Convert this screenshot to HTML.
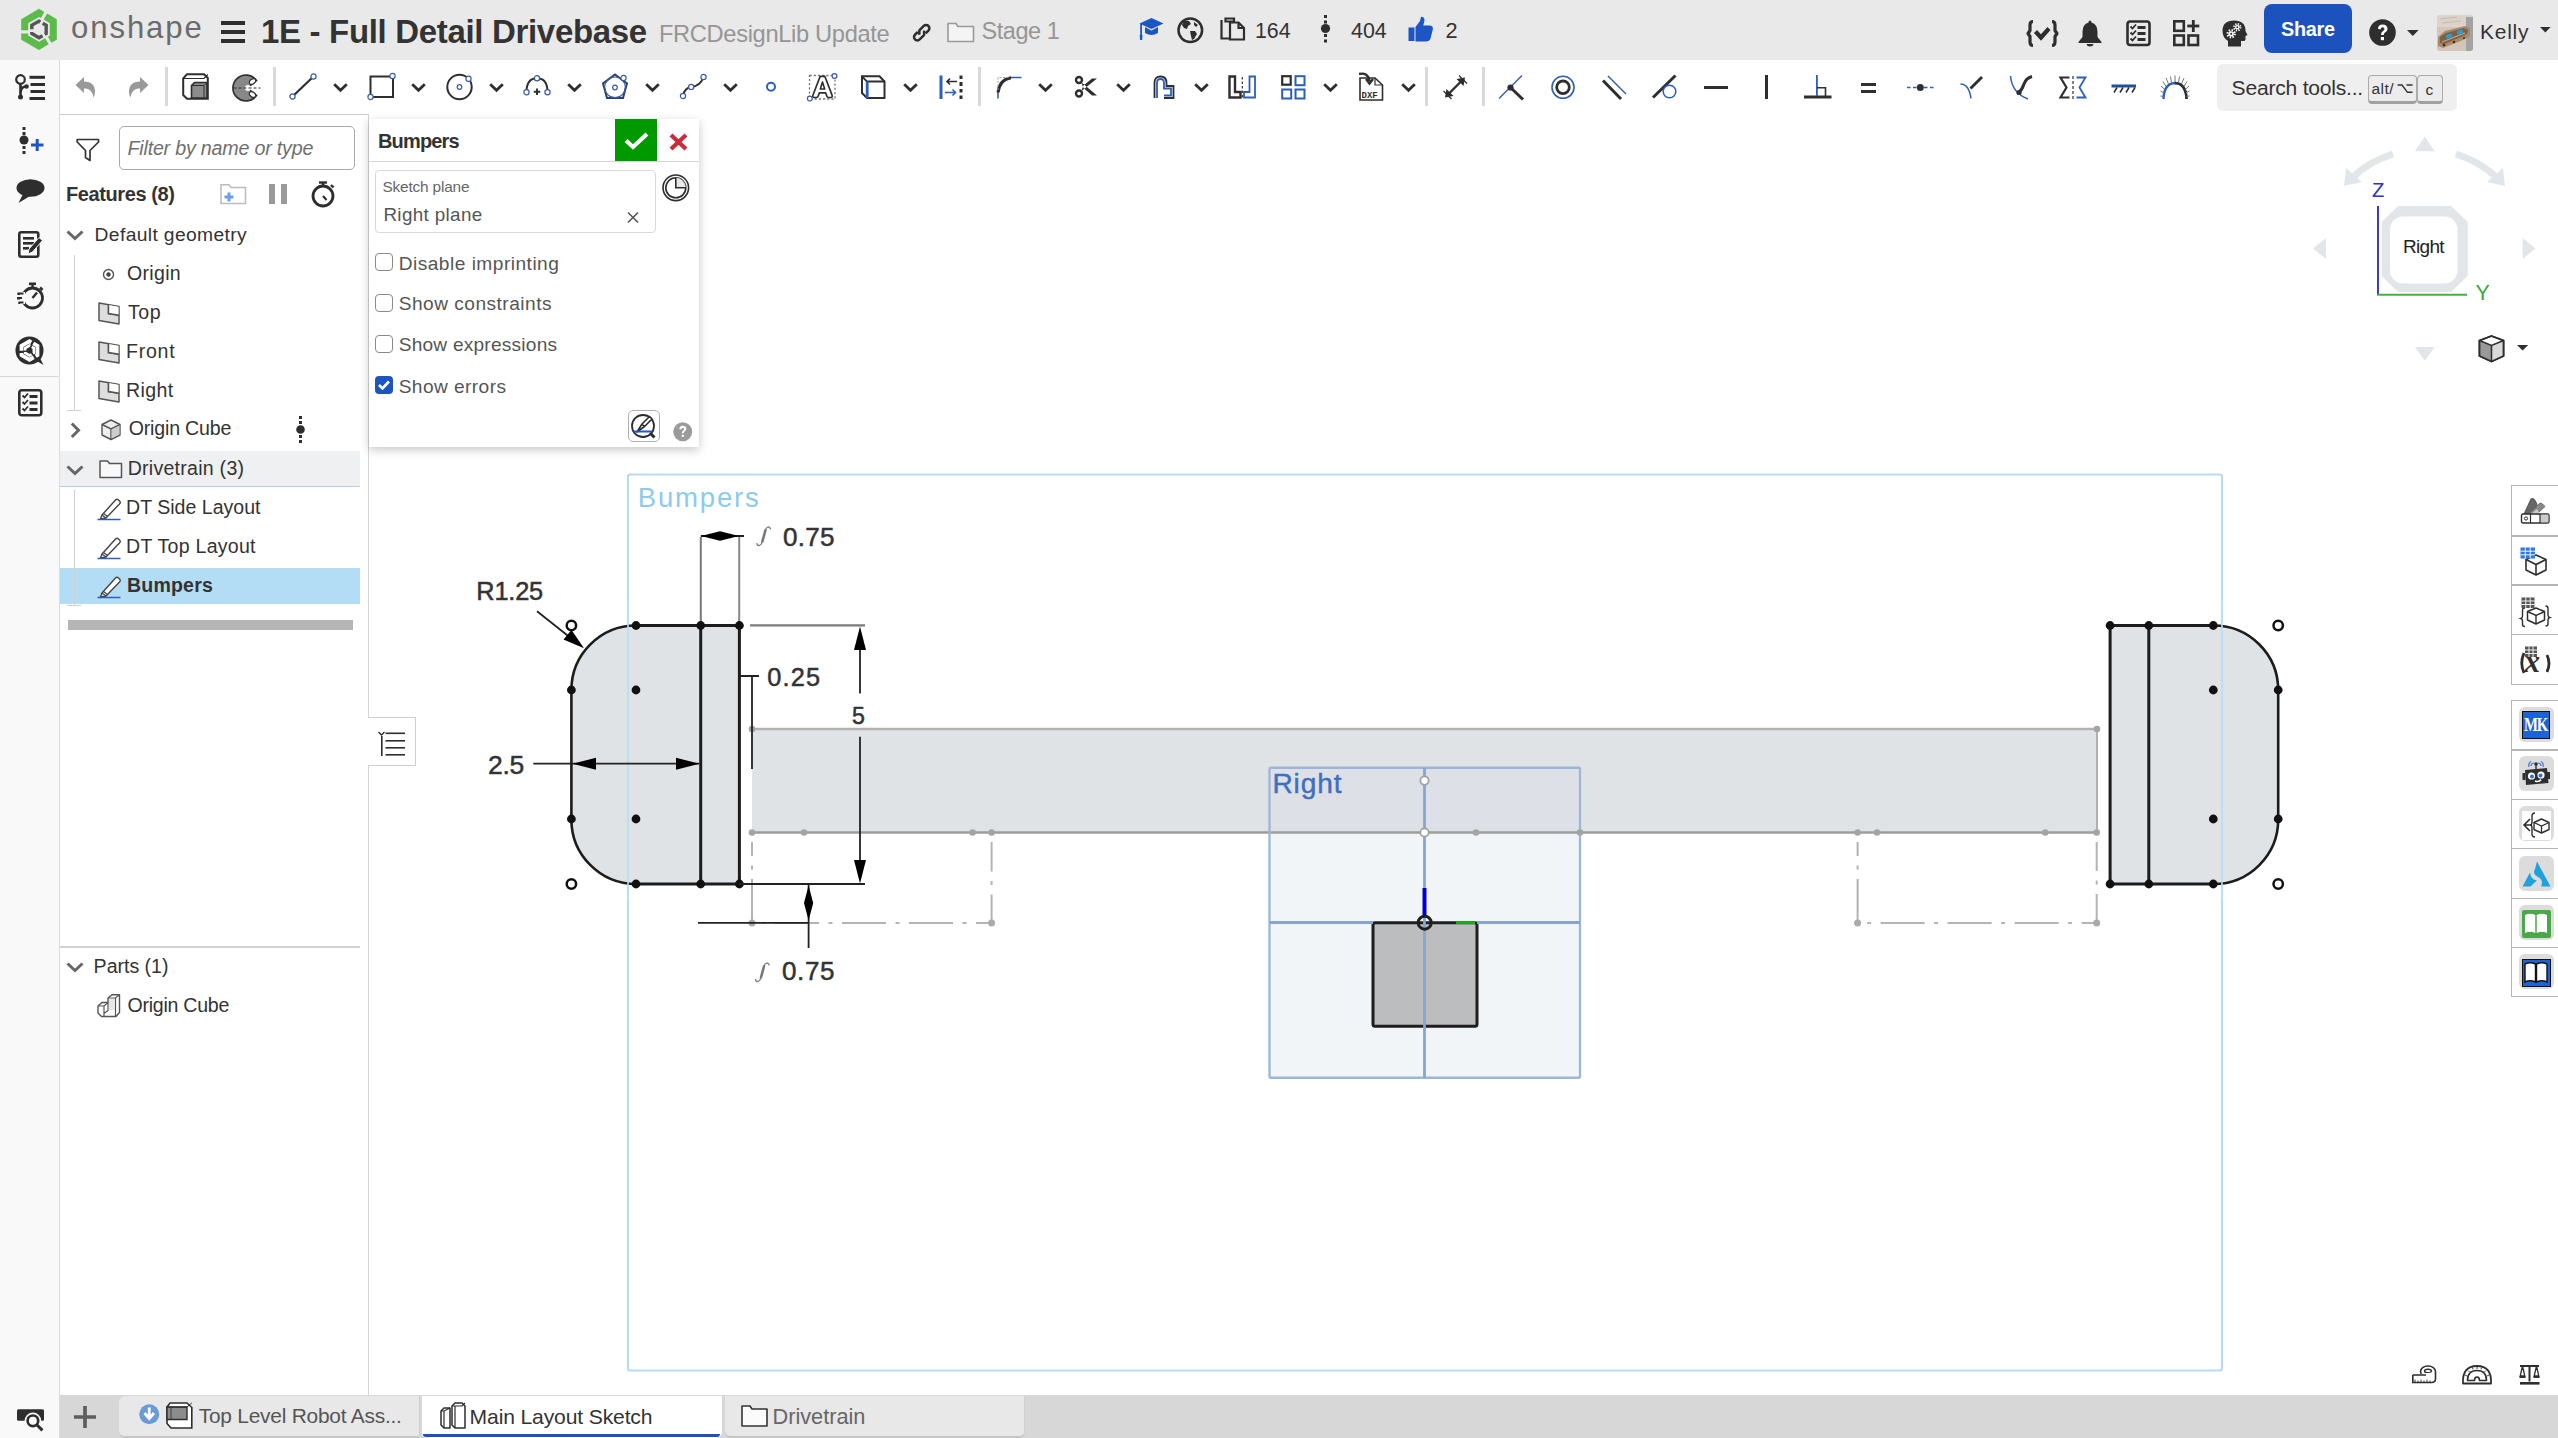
<!DOCTYPE html><html><head><meta charset="utf-8"><style>
html,body{margin:0;padding:0}
body{width:2558px;height:1438px;overflow:hidden;position:relative;background:#fff;font-family:"Liberation Sans",sans-serif}
.t{position:absolute;line-height:1;white-space:nowrap}
svg{overflow:visible}
</style></head><body>
<div style="position:absolute;left:0px;top:0px;width:2558px;height:60px;background:#e9e9e9"></div>
<div style="position:absolute;left:0px;top:60px;width:2558px;height:54px;background:#fff"></div>
<div style="position:absolute;left:0px;top:60px;width:59px;height:1378px;background:#f9f9f9;border-right:1px solid #dcdcdc"></div>
<div style="position:absolute;left:0px;top:376px;width:59px;height:1.3px;background:#d6d6d6"></div>
<div style="position:absolute;left:60px;top:114px;width:308px;height:1281px;background:#fff;border-top:1px solid #cfcfcf;border-right:1px solid #d4d4d4"></div>
<div style="position:absolute;left:60px;top:1395px;width:2498px;height:43px;background:#d7d7d7"></div>
<svg style="position:absolute;left:0px;top:0px;pointer-events:none" width="2558" height="1438" viewBox="0 0 2558 1438"><rect x="752" y="729" width="1345" height="103.5" fill="#e0e3e6"/><rect x="1269.5" y="832.5" width="310.5" height="245.2" fill="#f2f5f8"/><rect x="1269.5" y="767.75" width="310.5" height="64.75" fill="#dde1e7"/><path d="M636,625.5 L739.4,625.5 L739.4,884 L636,884 A64.6,64.6 0 0 1 571.4,819 L571.4,690 A64.6,64.6 0 0 1 636,625.5 Z" fill="#e0e3e6"/><path d="M2213.3,625.5 L2110.1,625.5 L2110.1,884 L2213.3,884 A64.6,64.6 0 0 0 2278.2,819 L2278.2,690 A64.6,64.6 0 0 0 2213.3,625.5 Z" fill="#e0e3e6"/><rect x="628" y="474.5" width="1594" height="896" rx="2" fill="none" stroke="#b7dbf1" stroke-width="2.2"/><line x1="752" y1="729" x2="2097" y2="729" stroke="#b2b2b2" stroke-width="2.5"/><line x1="752" y1="832.5" x2="2097" y2="832.5" stroke="#9d9d9d" stroke-width="2.5"/><line x1="2097" y1="729" x2="2097" y2="832.5" stroke="#b0b0b0" stroke-width="2"/><path d="M752,842 L752,923 L991.6,923 L991.6,842" fill="none" stroke="#b4b4b4" stroke-width="2" stroke-dasharray="44 9.5 4 9.5" stroke-dashoffset="30"/><circle cx="752" cy="923" r="3.5" fill="#aaa"/><circle cx="991.6" cy="923" r="3.5" fill="#aaa"/><path d="M1857.6,842 L1857.6,923 L2096.7,923 L2096.7,842" fill="none" stroke="#b4b4b4" stroke-width="2" stroke-dasharray="44 9.5 4 9.5" stroke-dashoffset="30"/><circle cx="1857.6" cy="923" r="3.5" fill="#aaa"/><circle cx="2096.7" cy="923" r="3.5" fill="#aaa"/><rect x="1269.5" y="767.75" width="310.5" height="310" fill="none" stroke="#9cb6d8" stroke-width="2.3" rx="1.5"/><rect x="1373" y="922.7" width="104" height="103.5" fill="#bcbdbf" stroke="#1e1e1e" stroke-width="3" rx="2"/><line x1="1269.5" y1="922.5" x2="1373" y2="922.5" stroke="#86a6d0" stroke-width="2.8"/><line x1="1477" y1="922.5" x2="1580" y2="922.5" stroke="#86a6d0" stroke-width="2.8"/><line x1="1424.5" y1="767.75" x2="1424.5" y2="1077.7" stroke="#86a6d0" stroke-width="2.8"/><line x1="1456" y1="922.5" x2="1475" y2="922.5" stroke="#1fa51f" stroke-width="3"/><line x1="1424.5" y1="888" x2="1424.5" y2="916" stroke="#0000d2" stroke-width="4"/><circle cx="1424.7" cy="922.7" r="6.5" fill="none" stroke="#1e1e1e" stroke-width="3"/><circle cx="752" cy="729" r="3.3" fill="#a4a4a4"/><circle cx="2097" cy="729" r="3.3" fill="#a4a4a4"/><circle cx="752" cy="832.5" r="3.3" fill="#a4a4a4"/><circle cx="804" cy="832.5" r="3.3" fill="#a4a4a4"/><circle cx="972.6" cy="832.5" r="3.3" fill="#a4a4a4"/><circle cx="991.6" cy="832.5" r="3.3" fill="#a4a4a4"/><circle cx="1476" cy="832.5" r="3.3" fill="#a4a4a4"/><circle cx="1580" cy="832.5" r="3.3" fill="#a4a4a4"/><circle cx="1857.6" cy="832.5" r="3.3" fill="#a4a4a4"/><circle cx="1877" cy="832.5" r="3.3" fill="#a4a4a4"/><circle cx="2045.3" cy="832.5" r="3.3" fill="#a4a4a4"/><circle cx="2096.7" cy="832.5" r="3.3" fill="#a4a4a4"/><circle cx="1424.5" cy="780.6" r="4.2" fill="#fff" stroke="#a0a0a0" stroke-width="1.8"/><circle cx="1424.5" cy="832.5" r="4.2" fill="#fff" stroke="#a0a0a0" stroke-width="1.8"/><line x1="700.8" y1="537" x2="700.8" y2="624" stroke="#777" stroke-width="2"/><line x1="739.2" y1="537" x2="739.2" y2="624" stroke="#888" stroke-width="2"/><line x1="750" y1="625.4" x2="865" y2="625.4" stroke="#7a7a7a" stroke-width="2.2"/><path d="M636,625.5 L739.4,625.5 L739.4,884 L636,884" fill="none" stroke="#1c1c1c" stroke-width="3"/><path d="M636,884 A64.6,64.6 0 0 1 571.4,819 L571.4,690 A64.6,64.6 0 0 1 636,625.5" fill="none" stroke="#1c1c1c" stroke-width="2.6"/><line x1="700.7" y1="625.5" x2="700.7" y2="884" stroke="#1c1c1c" stroke-width="3"/><circle cx="636" cy="625.5" r="4.4" fill="#111"/><circle cx="700.7" cy="625.5" r="4.4" fill="#111"/><circle cx="739.4" cy="625.5" r="4.4" fill="#111"/><circle cx="571.4" cy="690" r="4.4" fill="#111"/><circle cx="636" cy="690" r="4.4" fill="#111"/><circle cx="571.4" cy="819" r="4.4" fill="#111"/><circle cx="636" cy="819" r="4.4" fill="#111"/><circle cx="636" cy="884" r="4.4" fill="#111"/><circle cx="700.7" cy="884" r="4.4" fill="#111"/><circle cx="739.4" cy="884" r="4.4" fill="#111"/><circle cx="571.4" cy="625.5" r="4.7" fill="#fff" stroke="#111" stroke-width="2.5"/><circle cx="571.4" cy="884" r="4.7" fill="#fff" stroke="#111" stroke-width="2.5"/><path d="M2213.3,625.5 L2110.1,625.5 L2110.1,884 L2213.3,884" fill="none" stroke="#1c1c1c" stroke-width="3"/><path d="M2213.3,884 A64.6,64.6 0 0 0 2278.2,819 L2278.2,690 A64.6,64.6 0 0 0 2213.3,625.5" fill="none" stroke="#1c1c1c" stroke-width="2.6"/><line x1="2148.8" y1="625.5" x2="2148.8" y2="884" stroke="#1c1c1c" stroke-width="3"/><circle cx="2213.3" cy="625.5" r="4.4" fill="#111"/><circle cx="2148.8" cy="625.5" r="4.4" fill="#111"/><circle cx="2110.1" cy="625.5" r="4.4" fill="#111"/><circle cx="2278.2" cy="690" r="4.4" fill="#111"/><circle cx="2213.3" cy="690" r="4.4" fill="#111"/><circle cx="2278.2" cy="819" r="4.4" fill="#111"/><circle cx="2213.3" cy="819" r="4.4" fill="#111"/><circle cx="2213.3" cy="884" r="4.4" fill="#111"/><circle cx="2148.8" cy="884" r="4.4" fill="#111"/><circle cx="2110.1" cy="884" r="4.4" fill="#111"/><circle cx="2278.2" cy="625.5" r="4.7" fill="#fff" stroke="#111" stroke-width="2.5"/><circle cx="2278.2" cy="884" r="4.7" fill="#fff" stroke="#111" stroke-width="2.5"/><line x1="628" y1="600" x2="628" y2="900" stroke="#bfe0f4" stroke-width="1.6"/><line x1="2222" y1="600" x2="2222" y2="900" stroke="#bfe0f4" stroke-width="1.6"/><line x1="700.8" y1="536" x2="744" y2="536" stroke="#222" stroke-width="1.8"/><polygon points="701,536 720,531.2 739,536 720,540.8" fill="#000"/><path d="M770.4,528.8 C769.4,526.3 766.4,526.3 765.4,530.3" fill="none" stroke="#808080" stroke-width="1.5" stroke-linecap="round"/><path d="M765.4,530.3 L762.4,541.3" fill="none" stroke="#777" stroke-width="2.5" stroke-linecap="round"/><path d="M762.4,541.3 C761.4,545.8 757.9,546.8 756.9,543.8" fill="none" stroke="#808080" stroke-width="1.5" stroke-linecap="round"/><path d="M769,964.8 C768,962.3 765,962.3 764,966.3" fill="none" stroke="#808080" stroke-width="1.5" stroke-linecap="round"/><path d="M764,966.3 L761,977.3" fill="none" stroke="#777" stroke-width="2.5" stroke-linecap="round"/><path d="M761,977.3 C760,981.8 756.5,982.8 755.5,979.8" fill="none" stroke="#808080" stroke-width="1.5" stroke-linecap="round"/><line x1="537" y1="611.3" x2="572" y2="639" stroke="#222" stroke-width="1.8"/><polygon points="584,648.3 563.5,639.5 571.5,630" fill="#000"/><path d="M739.4,676 L759,676 M752,676 L752,769" fill="none" stroke="#222" stroke-width="1.8"/><line x1="739" y1="884" x2="865" y2="884" stroke="#222" stroke-width="2.2"/><line x1="860" y1="640" x2="860" y2="693.4" stroke="#222" stroke-width="1.8"/><line x1="860" y1="736.7" x2="860" y2="870" stroke="#222" stroke-width="1.8"/><polygon points="860,626.5 854,650 866,650" fill="#000"/><polygon points="860,883.5 854,860 866,860" fill="#000"/><line x1="533.3" y1="763.7" x2="699" y2="763.7" stroke="#222" stroke-width="1.8"/><polygon points="572.5,763.7 596,757.7 596,769.7" fill="#000"/><polygon points="699.5,763.7 676,757.7 676,769.7" fill="#000"/><line x1="808.6" y1="884" x2="808.6" y2="948" stroke="#222" stroke-width="1.8"/><polygon points="808.6,885.5 804,903 808.6,920.5 813.2,903" fill="#000"/><line x1="698" y1="922.9" x2="808.6" y2="922.9" stroke="#222" stroke-width="1.8"/></svg>
<svg style="position:absolute;left:21px;top:9px;" width="36" height="41" viewBox="0 0 36 41"><polygon points="18.00,3.90 32.29,12.15 32.29,28.65 18.00,36.90 3.71,28.65 3.71,12.15" fill="none" stroke="#5cbb4a" stroke-width="7" stroke-linejoin="miter" stroke-dasharray="29.80 3.2" stroke-dashoffset="25.62"/><polygon points="18.00,12.10 25.19,16.25 25.19,24.55 18.00,28.70 10.81,24.55 10.81,16.25" fill="none" stroke="#555" stroke-width="3.4" stroke-dasharray="14.00 2.6" stroke-dashoffset="12.39"/></svg>
<div style="position:absolute;left:221px;top:21px;width:24px;height:4px;background:#2e2e2e"></div>
<div style="position:absolute;left:221px;top:30px;width:24px;height:4px;background:#2e2e2e"></div>
<div style="position:absolute;left:221px;top:39px;width:24px;height:4px;background:#2e2e2e"></div>
<svg style="position:absolute;left:910px;top:22px;" width="24" height="22" viewBox="0 0 24 22"><g transform="translate(11.7,10.7) rotate(-45)" fill="none" stroke="#2e2e2e" stroke-width="2.5" stroke-linejoin="round"><path d="M-2.2,-3.3 L-6.2,-3.3 A3.3,3.3 0 0 0 -6.2,3.3 L0,3.3 L3.2,0.3"/><path d="M2.2,3.3 L6.2,3.3 A3.3,3.3 0 0 0 6.2,-3.3 L0,-3.3 L-3.2,-0.3"/></g></svg>
<svg style="position:absolute;left:947px;top:22px;" width="28" height="21" viewBox="0 0 28 21"><path d="M1,1.5 L9,1.5 L11,4.5 L26.5,4.5 L26.5,19.5 L1,19.5 Z" fill="#f4f4f4" stroke="#9a9a9a" stroke-width="1.6" stroke-linejoin="round"/></svg>
<svg style="position:absolute;left:1140px;top:18px;" width="24" height="23" viewBox="0 0 24 23"><g fill="#1b56c4"><polygon points="11.5,0 23.5,5.5 11.5,11 -0.5,5.5"/><path d="M5,9 L5,15 Q11.5,19 18,15 L18,9 L11.5,12.5 Z"/><rect x="0.2" y="6" width="1.8" height="11"/><path d="M-0.3,17 L2.5,17 L2.2,22 L0,22 Z"/></g></svg>
<svg style="position:absolute;left:1177px;top:16.6px;" width="27" height="27" viewBox="0 0 27 27"><circle cx="13.3" cy="13.3" r="11.8" fill="none" stroke="#2e2e2e" stroke-width="2.5"/><path d="M6,5 Q9,3 12,4 L14,7 L11,9 L10,12 L7,11 L5,8 Z M13,14 L18,14 L20,17 L17,22 L15,23 L14,19 Z M17,5 L21,8 L19,10 L17,8 Z" fill="#2e2e2e"/></svg>
<svg style="position:absolute;left:1220px;top:17px;" width="26" height="24" viewBox="0 0 26 24"><g fill="none" stroke="#2e2e2e" stroke-width="2.2"><path d="M1.5,3 L1.5,21.5 L10,21.5 M5.5,1.5 L14,1.5 L14,4.5 L5.5,4.5 Z"/><path d="M10,5.5 L18.5,5.5 L24,11 L24,22.5 L10,22.5 Z M18.5,5.5 L18.5,11 L24,11"/></g></svg>
<svg style="position:absolute;left:1320px;top:15px;" width="11" height="28" viewBox="0 0 11 28"><g fill="#2e2e2e"><rect x="4" y="0" width="3" height="3"/><rect x="4" y="5.5" width="3" height="3"/><circle cx="5.5" cy="13.5" r="4.6"/><rect x="4" y="19" width="3" height="3"/><rect x="4" y="24.5" width="3" height="3"/></g></svg>
<svg style="position:absolute;left:1408px;top:16px;" width="26" height="26" viewBox="0 0 26 26"><path fill="#1b56c4" d="M0.5,11.5 L6.5,11.5 L6.5,25 L0.5,25 Z M7.5,11 L12,5 L13,0.8 Q16.5,0.5 16.5,4.5 L15.3,9.5 L22,9.5 Q25.5,10 24.8,13.5 L22.5,22.5 Q21.5,25.5 18,25.5 L7.5,25.5 Z"/></svg>
<svg style="position:absolute;left:2027px;top:19.5px;" width="31" height="27" viewBox="0 0 31 27"><g fill="none" stroke="#2e2e2e" stroke-width="3.2" stroke-linejoin="round"><path d="M6,1.5 Q3,1.5 3,5 L3,10.5 L1,13.5 L3,16.5 L3,22 Q3,25.5 6,25.5"/><path d="M25,1.5 Q28,1.5 28,5 L28,10.5 L30,13.5 L28,16.5 L28,22 Q28,25.5 25,25.5"/></g><path d="M8.5,11.5 L14,17.5 L22,8.5" fill="none" stroke="#2e2e2e" stroke-width="4.2"/></svg>
<svg style="position:absolute;left:2078px;top:20px;" width="24" height="27" viewBox="0 0 24 27"><path fill="#2e2e2e" d="M12,0.5 Q13.5,0.5 13.5,2.5 Q19.5,4 19.5,12 L19.5,17 L23.5,22 L23.5,23 L0.5,23 L0.5,22 L4.5,17 L4.5,12 Q4.5,4 10.5,2.5 Q10.5,0.5 12,0.5 Z M8.5,24 L15.5,24 Q15,26.5 12,26.5 Q9,26.5 8.5,24 Z"/></svg>
<svg style="position:absolute;left:2126px;top:19.7px;" width="25" height="27" viewBox="0 0 25 27"><rect x="1.5" y="1.5" width="22" height="23.5" rx="2.5" fill="none" stroke="#2e2e2e" stroke-width="2.6"/><g fill="none" stroke="#2e2e2e" stroke-width="1.8"><path d="M4.5,6.5 L6.5,8.5 L10,4.5"/><path d="M4.5,12.5 L6.5,14.5 L10,10.5"/><path d="M4.5,18.5 L6.5,20.5 L10,16.5"/></g><g fill="#2e2e2e"><rect x="11.5" y="6" width="8" height="3"/><rect x="11.5" y="12" width="8" height="3"/><rect x="11.5" y="18" width="8" height="3"/></g></svg>
<svg style="position:absolute;left:2172.5px;top:19.7px;" width="27" height="27" viewBox="0 0 27 27"><g fill="none" stroke="#2e2e2e" stroke-width="2.6"><rect x="1.3" y="1.3" width="9.5" height="9.5"/><rect x="1.3" y="15.5" width="9.5" height="9.5"/><rect x="15.5" y="15.5" width="9.5" height="9.5"/></g><g fill="#2e2e2e"><rect x="18.9" y="0" width="2.8" height="12"/><rect x="14.3" y="4.6" width="12" height="2.8"/></g></svg>
<svg style="position:absolute;left:2222px;top:19.7px;" width="26" height="27" viewBox="0 0 26 27"><path fill="#2e2e2e" d="M12,0.5 Q23.5,0.5 23.5,11 L25.5,15 L23.5,16 L23.5,19.5 Q23.5,21 21,21 L19,21 L19,26.5 L6,26.5 L6,21 Q0.5,17.5 0.5,11 Q0.5,0.5 12,0.5 Z"/><circle cx="9.2" cy="13.8" r="2.6" fill="#fff"/><circle cx="9.2" cy="13.8" r="3.6" fill="none" stroke="#fff" stroke-width="2.2" stroke-dasharray="1.41 1.41"/><circle cx="9.2" cy="13.8" r="1.09" fill="#2e2e2e"/><circle cx="15.3" cy="7.2" r="2.1" fill="#fff"/><circle cx="15.3" cy="7.2" r="3.1" fill="none" stroke="#fff" stroke-width="2.2" stroke-dasharray="1.22 1.22"/><circle cx="15.3" cy="7.2" r="0.88" fill="#2e2e2e"/></svg>
<div style="position:absolute;left:2264px;top:4px;width:88px;height:49px;background:#1b52bd;border-radius:8px"></div>
<svg style="position:absolute;left:2368.6px;top:19px;" width="27" height="27" viewBox="0 0 27 27"><circle cx="13.5" cy="13.5" r="13.3" fill="#2e2e2e"/><path d="M9,10 Q9,5.5 13.5,5.5 Q18.5,5.5 18.5,10 Q18.5,12.5 15.5,14 Q14.8,14.5 14.8,16 L12,16 Q12,13 14,12 Q15.5,11 15.5,10 Q15.5,8.3 13.5,8.3 Q11.8,8.3 11.8,10.2 Z" fill="#fff"/><rect x="11.8" y="18" width="3.2" height="3.2" fill="#fff"/></svg>
<svg style="position:absolute;left:2407px;top:29.5px;" width="12" height="7" viewBox="0 0 12 7"><polygon points="0,0 11.6,0 5.8,6" fill="#2e2e2e"/></svg>
<svg style="position:absolute;left:2437px;top:15px;" width="36" height="36" viewBox="0 0 36 36"><defs><clipPath id="av"><rect x="0" y="0" width="36" height="36" rx="3"/></clipPath></defs><g clip-path="url(#av)"><rect width="36" height="36" fill="#d3c6b8"/><rect x="0" y="0" width="36" height="12" fill="#ddd3ca"/><path d="M3,4 L20,2 M5,8 L24,6" stroke="#bfb2a6" stroke-width="0.8"/><rect x="29" y="2" width="7" height="34" fill="#a3a3a3"/><polygon points="1,22 8,16 28,11 33,13 33,21 26,25 6,33 1,31" fill="#a98a68"/><polygon points="3,22 9,18 27,13 31,15 30,19 24,22 7,29 3,28" fill="#7c6148"/><path d="M5,27 L28,18" stroke="#c4a784" stroke-width="1.2"/><rect x="9" y="19" width="6" height="4" rx="1" fill="#2a9ad8" transform="rotate(-18 12 21)"/><rect x="20" y="15" width="6" height="4" rx="1" fill="#2a9ad8" transform="rotate(-18 23 17)"/><circle cx="7" cy="30" r="1.3" fill="#3a2c22"/><circle cx="17" cy="27" r="1.3" fill="#3a2c22"/><circle cx="27" cy="23" r="1.1" fill="#3a2c22"/></g></svg>
<svg style="position:absolute;left:2539.6px;top:27px;" width="11" height="6" viewBox="0 0 11 6"><polygon points="0,0 10.6,0 5.3,5.5" fill="#2e2e2e"/></svg>
<svg style="position:absolute;left:15px;top:74px;" width="31" height="27" viewBox="0 0 31 27"><circle cx="5.5" cy="5.5" r="4.3" fill="none" stroke="#2e2e2e" stroke-width="2.2"/><path d="M5.5,10 L5.5,23.5 M5.5,19 Q5.5,12.5 11.5,12.5" fill="none" stroke="#2e2e2e" stroke-width="2.6"/><circle cx="5.5" cy="23" r="2.5" fill="#2e2e2e"/><circle cx="11.5" cy="12.5" r="2.3" fill="#2e2e2e"/><g fill="#2e2e2e"><rect x="14.5" y="1.8" width="15.5" height="3"/><rect x="15.5" y="9" width="14.5" height="3"/><rect x="15.5" y="16" width="14.5" height="3"/><rect x="14.5" y="23" width="15.5" height="3"/></g></svg>
<svg style="position:absolute;left:75px;top:75.5px;" width="21" height="22" viewBox="0 0 21 22"><path d="M0.5,9 L9,1 L9,5.5 Q20,5.5 20,16 Q20,19 18.5,21.5 Q17,12 9,12.5 L9,17 Z" fill="#999"/></svg>
<svg style="position:absolute;left:128px;top:75.5px;" width="21" height="22" viewBox="0 0 21 22"><path d="M20.5,9 L12,1 L12,5.5 Q1,5.5 1,16 Q1,19 2.5,21.5 Q4,12 12,12.5 L12,17 Z" fill="#999"/></svg>
<div style="position:absolute;left:165.0px;top:67px;width:3px;height:39px;background:#d9d9d9"></div>
<svg style="position:absolute;left:181.5px;top:73.4px;" width="27" height="27" viewBox="0 0 27 27"><path d="M1.2,5.5 L5,1.2 L22,1.2 L25.8,5 L25.8,25.8 L5,25.8 L1.2,22 Z" fill="#fff" stroke="#2e2e2e" stroke-width="2"/><path d="M1.2,5.5 L22,5.5 L25.8,1.5" fill="none" stroke="#2e2e2e" stroke-width="1.2"/><path d="M9.5,12.5 L12.5,9.5 L25,9.5 L25,25 L9.5,25 Z" fill="#8c8c8c" stroke="#2e2e2e" stroke-width="1.6"/><path d="M9.5,12.5 L22,12.5 L25,9.5 M22,12.5 L22,25" fill="none" stroke="#2e2e2e" stroke-width="1"/></svg>
<svg style="position:absolute;left:233px;top:74px;" width="28" height="28" viewBox="0 0 28 28"><path d="M23.5,6.5 A13,13 0 1 0 23.5,21.5 L14.5,14 Z" fill="#888" stroke="#2e2e2e" stroke-width="1.6"/><ellipse cx="19.5" cy="7.5" rx="3.5" ry="2.3" transform="rotate(-35 19.5 7.5)" fill="#fff" stroke="#2e2e2e" stroke-width="1.2"/><ellipse cx="19.5" cy="20.5" rx="3.5" ry="2.3" transform="rotate(35 19.5 20.5)" fill="#fff" stroke="#2e2e2e" stroke-width="1.2"/><circle cx="15" cy="14" r="3" fill="#fff"/><path d="M0.5,14 L27.5,14" stroke="#2e2e2e" stroke-width="1.2" stroke-dasharray="3 2"/></svg>
<div style="position:absolute;left:272.5px;top:67px;width:3px;height:39px;background:#d9d9d9"></div>
<svg style="position:absolute;left:289px;top:73.4px;" width="28" height="27" viewBox="0 0 28 27"><line x1="3.5" y1="23.5" x2="24.5" y2="3.5" stroke="#2e2e2e" stroke-width="2.2"/><circle cx="3.5" cy="23.5" r="2.6" fill="#fff" stroke="#3a5ca6" stroke-width="1.2"/><circle cx="24.5" cy="3.5" r="2.6" fill="#fff" stroke="#3a5ca6" stroke-width="1.2"/></svg>
<svg style="position:absolute;left:333px;top:83px;" width="15" height="9" viewBox="0 0 15 9"><path d="M1.2,1.2 L7.5,7.3 L13.8,1.2" fill="none" stroke="#2e2e2e" stroke-width="2.8"/></svg>
<svg style="position:absolute;left:368px;top:73.4px;" width="27" height="27" viewBox="0 0 27 27"><rect x="2.5" y="3.5" width="22.5" height="20.5" fill="none" stroke="#2e2e2e" stroke-width="2"/><circle cx="2.5" cy="24" r="2.6" fill="#fff" stroke="#3a5ca6" stroke-width="1.2"/><circle cx="24.5" cy="3" r="2.6" fill="#fff" stroke="#3a5ca6" stroke-width="1.2"/></svg>
<svg style="position:absolute;left:411px;top:83px;" width="15" height="9" viewBox="0 0 15 9"><path d="M1.2,1.2 L7.5,7.3 L13.8,1.2" fill="none" stroke="#2e2e2e" stroke-width="2.8"/></svg>
<svg style="position:absolute;left:445.5px;top:73.4px;" width="27" height="27" viewBox="0 0 27 27"><circle cx="13.5" cy="14" r="12.2" fill="none" stroke="#2e2e2e" stroke-width="2"/><circle cx="13.5" cy="14" r="2.3" fill="#fff" stroke="#3a5ca6" stroke-width="1.2"/><circle cx="22.5" cy="5.8" r="2.6" fill="#fff" stroke="#3a5ca6" stroke-width="1.2"/></svg>
<svg style="position:absolute;left:489px;top:83px;" width="15" height="9" viewBox="0 0 15 9"><path d="M1.2,1.2 L7.5,7.3 L13.8,1.2" fill="none" stroke="#2e2e2e" stroke-width="2.8"/></svg>
<svg style="position:absolute;left:523px;top:73.4px;" width="29" height="27" viewBox="0 0 29 27"><path d="M3.5,19.3 Q3.5,5.3 14,5.3 Q24.5,5.3 24.5,19.3" fill="none" stroke="#2e2e2e" stroke-width="2"/><circle cx="14" cy="5.3" r="2.6" fill="#fff" stroke="#3a5ca6" stroke-width="1.2"/><circle cx="3.5" cy="19.3" r="2.6" fill="#fff" stroke="#3a5ca6" stroke-width="1.2"/><circle cx="24.5" cy="19.3" r="2.6" fill="#fff" stroke="#3a5ca6" stroke-width="1.2"/><path d="M14,15.5 L14,22 M10.8,18.8 L17.2,18.8" stroke="#2e2e2e" stroke-width="1.9"/></svg>
<svg style="position:absolute;left:567px;top:83px;" width="15" height="9" viewBox="0 0 15 9"><path d="M1.2,1.2 L7.5,7.3 L13.8,1.2" fill="none" stroke="#2e2e2e" stroke-width="2.8"/></svg>
<svg style="position:absolute;left:602px;top:73.4px;" width="27" height="27" viewBox="0 0 27 27"><polygon points="13,1.5 25,10.5 21,25 5,25 1,10.5" fill="none" stroke="#2a3e6a" stroke-width="2"/><circle cx="13" cy="14.3" r="10.3" fill="none" stroke="#3a5ca6" stroke-width="1.1"/><circle cx="13" cy="14.5" r="2.3" fill="#fff" stroke="#3a5ca6" stroke-width="1.2"/><circle cx="21.5" cy="5" r="2.6" fill="#fff" stroke="#3a5ca6" stroke-width="1.2"/></svg>
<svg style="position:absolute;left:645px;top:83px;" width="15" height="9" viewBox="0 0 15 9"><path d="M1.2,1.2 L7.5,7.3 L13.8,1.2" fill="none" stroke="#2e2e2e" stroke-width="2.8"/></svg>
<svg style="position:absolute;left:680px;top:73.4px;" width="27" height="27" viewBox="0 0 27 27"><path d="M3,23 C4,17 7,14.5 11.2,14 C16,13.5 21,11 23.5,4" fill="none" stroke="#2e2e2e" stroke-width="2"/><circle cx="3" cy="23" r="2.6" fill="#fff" stroke="#3a5ca6" stroke-width="1.2"/><circle cx="11.2" cy="13.9" r="2.6" fill="#fff" stroke="#3a5ca6" stroke-width="1.2"/><circle cx="23.5" cy="4" r="2.6" fill="#fff" stroke="#3a5ca6" stroke-width="1.2"/></svg>
<svg style="position:absolute;left:723px;top:83px;" width="15" height="9" viewBox="0 0 15 9"><path d="M1.2,1.2 L7.5,7.3 L13.8,1.2" fill="none" stroke="#2e2e2e" stroke-width="2.8"/></svg>
<svg style="position:absolute;left:766px;top:82px;" width="10" height="10" viewBox="0 0 10 10"><circle cx="5" cy="4.7" r="4" fill="#fff" stroke="#2b5fb8" stroke-width="2"/></svg>
<svg style="position:absolute;left:807px;top:73px;" width="31" height="28" viewBox="0 0 31 28"><rect x="2.5" y="2.5" width="25.5" height="23.5" fill="none" stroke="#777" stroke-width="1.3" stroke-dasharray="2.2 2"/><path d="M7.5,24.5 Q5,24.5 6,22 L13.2,3.3 L17.8,3.3 L25,22 Q26,24.5 23.5,24.5 L21.5,24.5 Q20.3,24.5 19.8,23 L18.6,19.8 L12.4,19.8 L11.2,23 Q10.7,24.5 9.5,24.5 Z" fill="#fff" stroke="#2e2e2e" stroke-width="1.7" stroke-linejoin="round"/><path d="M13.3,16 L15.5,9 L17.7,16 Z" fill="#fff" stroke="#2e2e2e" stroke-width="1.6" stroke-linejoin="round"/><circle cx="2.8" cy="25.6" r="2.4" fill="#fff" stroke="#3a5ca6" stroke-width="1.2"/><circle cx="27.5" cy="3" r="2.4" fill="#fff" stroke="#3a5ca6" stroke-width="1.2"/></svg>
<svg style="position:absolute;left:861px;top:75px;" width="25" height="24" viewBox="0 0 25 24"><path d="M1,1.3 L18.5,1.3 L23.5,6.5 L23.5,23 L6,23 L1,18 Z" fill="none" stroke="#2e2e2e" stroke-width="2"/><path d="M1,1.3 L6,6.5 L23.5,6.5 M6,6.5 L6,23" fill="none" stroke="#2e2e2e" stroke-width="1.8"/><rect x="4.8" y="6.5" width="2.8" height="16.5" fill="#2b5fb8"/></svg>
<svg style="position:absolute;left:903px;top:83px;" width="15" height="9" viewBox="0 0 15 9"><path d="M1.2,1.2 L7.5,7.3 L13.8,1.2" fill="none" stroke="#2e2e2e" stroke-width="2.8"/></svg>
<svg style="position:absolute;left:939px;top:74.5px;" width="25" height="25" viewBox="0 0 25 25"><rect x="0.5" y="0.5" width="3" height="23.5" fill="#2b5fb8"/><g fill="#2e2e2e"><rect x="20.5" y="0.5" width="3" height="3.5"/><rect x="20.5" y="7" width="3" height="4"/><rect x="20.5" y="14" width="3" height="3.5"/><rect x="20.5" y="20.5" width="3" height="3.5"/></g><path d="M18,6.5 L8,6.5 M11,3.5 L8,6.5 L11,9.5" fill="none" stroke="#2e2e2e" stroke-width="1.6"/><path d="M6,17.5 L16.5,17.5 M13.5,14.5 L16.5,17.5 L13.5,20.5" fill="none" stroke="#2b5fb8" stroke-width="1.6"/></svg>
<div style="position:absolute;left:977.5px;top:67px;width:3px;height:39px;background:#d9d9d9"></div>
<svg style="position:absolute;left:995.5px;top:75px;" width="26" height="24" viewBox="0 0 26 24"><path d="M2,23.5 L2,17 Q3,4 15,2.5 L25.5,2.5" fill="none" stroke="#2b5fb8" stroke-width="1.6"/><path d="M2,17.5 Q3.5,4.5 15,2.8" fill="none" stroke="#2e2e2e" stroke-width="3"/><path d="M2,15 L2,2.5 L14,2.5" fill="none" stroke="#999" stroke-width="1" stroke-dasharray="2 1.5"/></svg>
<svg style="position:absolute;left:1038px;top:83px;" width="15" height="9" viewBox="0 0 15 9"><path d="M1.2,1.2 L7.5,7.3 L13.8,1.2" fill="none" stroke="#2e2e2e" stroke-width="2.8"/></svg>
<svg style="position:absolute;left:1074.6px;top:76px;" width="23" height="22" viewBox="0 0 23 22"><circle cx="4" cy="4" r="3" fill="none" stroke="#2e2e2e" stroke-width="2.4"/><circle cx="4" cy="17.5" r="3" fill="none" stroke="#2e2e2e" stroke-width="2.4"/><path d="M6,6 L22,19.5 L17,19.5 L8.5,12 Z M6,15.5 L22,2.5 L17,2.5 L8.5,9.5 Z" fill="#2e2e2e"/></svg>
<svg style="position:absolute;left:1116px;top:83px;" width="15" height="9" viewBox="0 0 15 9"><path d="M1.2,1.2 L7.5,7.3 L13.8,1.2" fill="none" stroke="#2e2e2e" stroke-width="2.8"/></svg>
<svg style="position:absolute;left:1153px;top:75px;" width="23" height="24" viewBox="0 0 23 24"><path d="M1.5,23 L1.5,8 Q1.5,1.5 7.5,1.5 Q13.5,1.5 13.5,8 L13.5,11 L20.5,11 L20.5,23 L11,23" fill="none" stroke="#2e2e2e" stroke-width="1.8"/><path d="M4,23 L4,8 Q4,4 7.5,4 Q11,4 11,8 L11,13.5 L18,13.5 L18,20.5 L11,20.5" fill="none" stroke="#2b5fb8" stroke-width="1.8"/></svg>
<svg style="position:absolute;left:1194px;top:83px;" width="15" height="9" viewBox="0 0 15 9"><path d="M1.2,1.2 L7.5,7.3 L13.8,1.2" fill="none" stroke="#2e2e2e" stroke-width="2.8"/></svg>
<svg style="position:absolute;left:1228px;top:75px;" width="29" height="24" viewBox="0 0 29 24"><path d="M1.5,1.5 L7,1.5 L7,17 L12.5,17 L12.5,22.5 L1.5,22.5 Z" fill="none" stroke="#2e2e2e" stroke-width="2.4"/><path d="M27,1.5 L21.5,1.5 L21.5,17 L16,17 L16,22.5 L27,22.5 Z" fill="none" stroke="#2b5fb8" stroke-width="1.8"/><path d="M14.3,2 L14.3,23" stroke="#2e2e2e" stroke-width="1.2" stroke-dasharray="2.5 2"/></svg>
<svg style="position:absolute;left:1281px;top:75px;" width="25" height="25" viewBox="0 0 25 25"><rect x="1.2" y="1.2" width="8.5" height="8.5" fill="none" stroke="#2e2e2e" stroke-width="2.2"/><g fill="none" stroke="#2b5fb8" stroke-width="2"><rect x="14.5" y="1.2" width="9" height="9"/><rect x="1.2" y="14.5" width="9" height="9"/><rect x="14.5" y="14.5" width="9" height="9"/></g></svg>
<svg style="position:absolute;left:1323px;top:83px;" width="15" height="9" viewBox="0 0 15 9"><path d="M1.2,1.2 L7.5,7.3 L13.8,1.2" fill="none" stroke="#2e2e2e" stroke-width="2.8"/></svg>
<svg style="position:absolute;left:1359px;top:73px;" width="25" height="28" viewBox="0 0 25 28"><path d="M1,5 L16,5 L23.5,12 L23.5,27 L1,27 Z" fill="#fff" stroke="#2e2e2e" stroke-width="1.6"/><path d="M16,5 L16,12 L23.5,12" fill="none" stroke="#2e2e2e" stroke-width="1.2"/><path d="M0,1 Q9,-1 10.5,8 M7,6 L10.5,10.5 L14,6" fill="none" stroke="#2e2e2e" stroke-width="2.4"/><text x="2.5" y="24.5" font-family="Liberation Mono" font-weight="bold" font-size="9" fill="#2e2e2e">DXF</text></svg>
<svg style="position:absolute;left:1401px;top:83px;" width="15" height="9" viewBox="0 0 15 9"><path d="M1.2,1.2 L7.5,7.3 L13.8,1.2" fill="none" stroke="#2e2e2e" stroke-width="2.8"/></svg>
<div style="position:absolute;left:1425.0px;top:67px;width:3px;height:39px;background:#d9d9d9"></div>
<svg style="position:absolute;left:1443px;top:74px;" width="25" height="26" viewBox="0 0 25 26"><path d="M4,21.5 L20,5.5" stroke="#2e2e2e" stroke-width="2.4"/><polygon points="2,23.5 3.5,15 10.5,22" fill="#2e2e2e"/><polygon points="22,3.5 20.5,12 13.5,5" fill="#2e2e2e"/><path d="M16,1.5 L24,9.5 M0.5,17 L8.5,25" stroke="#2e2e2e" stroke-width="1.2"/></svg>
<div style="position:absolute;left:1482.0px;top:67px;width:3px;height:39px;background:#d9d9d9"></div>
<svg style="position:absolute;left:1498px;top:73.5px;" width="27" height="27" viewBox="0 0 27 27"><path d="M1,24.5 L24,1.5" stroke="#2b5fb8" stroke-width="1.5"/><path d="M12.5,13.5 L25,25.5" stroke="#2e2e2e" stroke-width="3"/><circle cx="12.5" cy="13.5" r="3.1" fill="#2e2e2e"/></svg>
<svg style="position:absolute;left:1551px;top:74.5px;" width="25" height="25" viewBox="0 0 25 25"><circle cx="12" cy="12.3" r="11" fill="none" stroke="#2b5fb8" stroke-width="1.6"/><circle cx="12" cy="12.3" r="6.3" fill="none" stroke="#2e2e2e" stroke-width="2.8"/></svg>
<svg style="position:absolute;left:1602px;top:74.5px;" width="25" height="25" viewBox="0 0 25 25"><path d="M1,5.5 L19,24" stroke="#2e2e2e" stroke-width="3"/><path d="M6,1 L24,19" stroke="#2b5fb8" stroke-width="1.5"/></svg>
<svg style="position:absolute;left:1652px;top:73.5px;" width="26" height="26" viewBox="0 0 26 26"><path d="M1,23.5 L23.5,1.5" stroke="#2e2e2e" stroke-width="3"/><circle cx="17.5" cy="17.5" r="6.3" fill="none" stroke="#2b5fb8" stroke-width="1.5"/></svg>
<div style="position:absolute;left:1704px;top:85.5px;width:24px;height:3px;background:#2e2e2e"></div>
<div style="position:absolute;left:1765px;top:75px;width:3px;height:23.7px;background:#2e2e2e"></div>
<svg style="position:absolute;left:1804px;top:75px;" width="28" height="24" viewBox="0 0 28 24"><rect x="0" y="20.5" width="27.5" height="3" fill="#2e2e2e"/><rect x="12" y="0" width="1.8" height="21" fill="#2b5fb8"/><path d="M13,12.8 L21.5,12.8 L21.5,21" fill="none" stroke="#2e2e2e" stroke-width="1.6"/></svg>
<div style="position:absolute;left:1861px;top:82.5px;width:15px;height:3px;background:#2e2e2e"></div>
<div style="position:absolute;left:1861px;top:89.5px;width:15px;height:3px;background:#2e2e2e"></div>
<svg style="position:absolute;left:1907px;top:82px;" width="27" height="11" viewBox="0 0 27 11"><path d="M0,5.5 L3.5,5.5 M23,5.5 L26.5,5.5" stroke="#2b5fb8" stroke-width="1.5"/><path d="M6,5.5 L9.5,5.5 M17,5.5 L20.5,5.5" stroke="#2b5fb8" stroke-width="1.5"/><circle cx="13.3" cy="5.5" r="3.5" fill="#2e2e2e"/></svg>
<svg style="position:absolute;left:1959.5px;top:75.5px;" width="23" height="23" viewBox="0 0 23 23"><path d="M0.5,8 Q9,8 11,22.5" fill="none" stroke="#2b5fb8" stroke-width="1.5"/><path d="M10.5,12.5 L22,1" stroke="#2e2e2e" stroke-width="2.8"/></svg>
<svg style="position:absolute;left:2010px;top:74.5px;" width="24" height="25" viewBox="0 0 24 25"><path d="M0.5,1 Q2,18 18,24" fill="none" stroke="#2b5fb8" stroke-width="1.5"/><path d="M8.5,18 Q12,15 14,9 Q16,3 22,1.5" fill="none" stroke="#2e2e2e" stroke-width="3"/><circle cx="9" cy="17.5" r="2.6" fill="#2e2e2e"/></svg>
<svg style="position:absolute;left:2059px;top:75.5px;" width="28" height="23" viewBox="0 0 28 23"><path d="M10.5,1.5 L1.5,1.5 L7.5,11.5 L1.5,21.5 L10.5,21.5" fill="none" stroke="#2e2e2e" stroke-width="2.2"/><path d="M17.5,1.5 L26.5,1.5 L20.5,11.5 L26.5,21.5 L17.5,21.5" fill="none" stroke="#2b5fb8" stroke-width="1.8"/><path d="M14,0 L14,23" stroke="#2e2e2e" stroke-width="1.2" stroke-dasharray="3 2"/></svg>
<svg style="position:absolute;left:2111px;top:83.5px;" width="26" height="9" viewBox="0 0 26 9"><rect x="0.5" y="0.5" width="24.5" height="3" fill="#1e4f9e"/><path d="M3,8.5 L6,3.5 M9,8.5 L12,3.5 M15,8.5 L18,3.5 M21,8.5 L24,3.5" stroke="#2e2e2e" stroke-width="1.5"/></svg>
<svg style="position:absolute;left:2160px;top:74.5px;" width="31" height="25" viewBox="0 0 31 25"><path d="M3.5,24 Q4,8.5 15,8 Q26,8.5 26.5,24" fill="none" stroke="#2b5fb8" stroke-width="2.4"/><path d="M15,8 Q26,8.5 26.5,24" fill="none" stroke="#2e2e2e" stroke-width="2.4"/><g stroke="#777" stroke-width="1"><path d="M15,7 L15,0.5 M11.5,7.5 L10.5,1.5 M18.5,7.5 L19.5,1.5 M8.5,9 L6,3 M21.5,9 L24,3 M6,11.5 L3,6.5 M24,11.5 L27,6.5 M4.7,14.5 L1,11 M25.3,14.5 L29,11 M4,18 L0.5,16 M26,18 L29.5,16 M3.7,21.5 L0.5,21 M26.3,21.5 L29.5,21"/></g></svg>
<div style="position:absolute;left:2217px;top:63.5px;width:240px;height:47px;background:#efefef;border-radius:6px"></div>
<div style="position:absolute;left:2368px;top:75px;width:48.5px;height:28.5px;background:#ececec;border:1.3px solid #ababab;border-bottom:3px solid #a0a0a0;border-radius:4px;box-sizing:border-box"></div>
<div style="position:absolute;left:2417px;top:75px;width:26px;height:28.5px;background:#ececec;border:1.3px solid #ababab;border-bottom:3px solid #a0a0a0;border-radius:4px;box-sizing:border-box"></div>
<div class="t" style="left:2371.5px;top:81.4px;font-size:15.5px;color:#333;letter-spacing:0.5px">alt/</div>
<svg style="position:absolute;left:2396.5px;top:84.4px;" width="16" height="10" viewBox="0 0 16 10"><path d="M0.5,1 L5,1 L10.5,8.3 L15.5,8.3 M9.5,1 L15.5,1" fill="none" stroke="#333" stroke-width="1.4"/></svg>
<div class="t" style="left:2425.5px;top:81.5px;font-size:15.5px;color:#333">c</div>
<div style="position:absolute;left:60px;top:451px;width:300px;height:35px;background:#eef0f2;border-bottom:1.5px solid #b4d3ea"></div>
<div style="position:absolute;left:60px;top:568px;width:300px;height:35.5px;background:#b3dcf5"></div>
<svg style="position:absolute;left:19px;top:126.5px;" width="25" height="27" viewBox="0 0 25 27"><g fill="#2e2e2e"><rect x="3.5" y="0" width="3" height="3"/><rect x="3.5" y="5" width="3" height="3"/><circle cx="5" cy="13" r="4.5"/><rect x="3.5" y="19" width="3" height="3"/><rect x="3.5" y="24" width="3" height="3"/></g><path d="M12,18 L24.5,18 M18.2,12 L18.2,24" stroke="#1b56c4" stroke-width="3"/></svg>
<svg style="position:absolute;left:15.5px;top:179px;" width="29" height="25" viewBox="0 0 29 25"><ellipse cx="14.5" cy="9" rx="14" ry="8.7" fill="#2e2e2e"/><path d="M7,15 L2.5,24 L14,17 Z" fill="#2e2e2e"/></svg>
<svg style="position:absolute;left:18px;top:231px;" width="26" height="28" viewBox="0 0 26 28"><rect x="1.3" y="1.3" width="19" height="24.5" rx="2" fill="none" stroke="#2e2e2e" stroke-width="2.6"/><g fill="#2e2e2e"><rect x="5" y="6" width="11" height="2.6"/><rect x="5" y="11" width="11" height="2.6"/><rect x="5" y="16" width="6" height="2.6"/></g><path d="M10,23 L11,18 L21,6.5 L24.5,9.5 L14.5,21 Z" fill="#2e2e2e" stroke="#f9f9f9" stroke-width="1"/></svg>
<svg style="position:absolute;left:16.7px;top:282px;" width="27" height="28" viewBox="0 0 27 28"><circle cx="15.5" cy="16" r="10" fill="none" stroke="#2e2e2e" stroke-width="2.8"/><rect x="12" y="0.5" width="7" height="2.6" fill="#2e2e2e"/><rect x="14.3" y="2" width="2.4" height="4" fill="#2e2e2e"/><path d="M23,5.5 L25.5,8" stroke="#2e2e2e" stroke-width="2.6"/><path d="M15.5,16 L20,10.5" stroke="#2e2e2e" stroke-width="2.4"/><g stroke="#2e2e2e" stroke-width="2"><path d="M0.5,12 L7,12 M0,16.5 L5.5,16.5 M1.5,21 L7,21"/></g><rect x="3" y="10" width="5" height="12" fill="#f9f9f9"/><g stroke="#2e2e2e" stroke-width="2"><path d="M0.5,11.5 L6.5,11.5 M0,16 L5,16 M1.5,20.5 L6.5,20.5"/></g></svg>
<svg style="position:absolute;left:15px;top:335.5px;" width="30" height="30" viewBox="0 0 30 30"><circle cx="14.5" cy="14.5" r="14" fill="#2e2e2e"/><path d="M20,24 L28.5,29 L24,20 Z" fill="#2e2e2e"/><polygon points="14.50,5.30 22.47,9.90 22.47,19.10 14.50,23.70 6.53,19.10 6.53,9.90" fill="none" stroke="#fff" stroke-width="3.8" stroke-dasharray="16.20 2.2" stroke-dashoffset="14.08"/><polygon points="14.50,9.50 18.83,12.00 18.83,17.00 14.50,19.50 10.17,17.00 10.17,12.00" fill="none" stroke="#fff" stroke-width="2.6" stroke-dasharray="8.40 1.6" stroke-dashoffset="7.45"/></svg>
<svg style="position:absolute;left:18px;top:389px;" width="25" height="28" viewBox="0 0 25 28"><rect x="1.3" y="1.3" width="22" height="25" rx="2.5" fill="none" stroke="#2e2e2e" stroke-width="2.6"/><g fill="none" stroke="#2e2e2e" stroke-width="1.8"><path d="M4.5,6.5 L6.5,8.5 L10,4.5"/><path d="M4.5,13 L6.5,15 L10,11"/><path d="M4.5,19.5 L6.5,21.5 L10,17.5"/></g><g fill="#2e2e2e"><rect x="11.5" y="6" width="8" height="3"/><rect x="11.5" y="12.5" width="8" height="3"/><rect x="11.5" y="19" width="8" height="3"/></g></svg>
<svg style="position:absolute;left:76px;top:138px;" width="24" height="24" viewBox="0 0 24 24"><path d="M1.2,1.5 L22.5,1.5 L22.5,4 L14,12.5 L14,22.5 L9.5,19.5 L9.5,12.5 L1.2,4 Z" fill="none" stroke="#333" stroke-width="1.7" stroke-linejoin="round"/></svg>
<div style="position:absolute;left:119px;top:126px;width:236px;height:44px;border:1.3px solid #a9a9a9;border-radius:5px;box-sizing:border-box;background:#fff"></div>
<svg style="position:absolute;left:219.5px;top:184px;" width="27" height="21" viewBox="0 0 27 21"><path d="M1,2 L1,0.8 L9,0.8 L11,3.5 L25.5,3.5 L25.5,19.5 L1,19.5 Z" fill="#fff" stroke="#bbb" stroke-width="1.5"/><path d="M4.5,13 L13.5,13 M9,8.5 L9,17.5" stroke="#6d9ee8" stroke-width="3"/></svg>
<div style="position:absolute;left:269px;top:183.5px;width:6px;height:20.5px;background:#9a9a9a"></div>
<div style="position:absolute;left:281px;top:183.5px;width:6px;height:20.5px;background:#9a9a9a"></div>
<svg style="position:absolute;left:311px;top:180.5px;" width="24" height="27" viewBox="0 0 24 27"><circle cx="12" cy="15" r="10" fill="none" stroke="#2e2e2e" stroke-width="2.8"/><rect x="8" y="0.3" width="8" height="2.4" fill="#2e2e2e"/><rect x="10.8" y="2" width="2.4" height="3.5" fill="#2e2e2e"/><path d="M20,4 L22.5,6.5" stroke="#2e2e2e" stroke-width="2.4"/><path d="M12,15 L15.5,19" stroke="#2e2e2e" stroke-width="2"/></svg>
<svg style="position:absolute;left:66px;top:230px;" width="18" height="10" viewBox="0 0 18 10"><path d="M1.5,1.5 L9,8.5 L16.5,1.5" fill="none" stroke="#666" stroke-width="3"/></svg>
<svg style="position:absolute;left:66px;top:464.5px;" width="18" height="10" viewBox="0 0 18 10"><path d="M1.5,1.5 L9,8.5 L16.5,1.5" fill="none" stroke="#666" stroke-width="3"/></svg>
<svg style="position:absolute;left:66px;top:962px;" width="18" height="10" viewBox="0 0 18 10"><path d="M1.5,1.5 L9,8.5 L16.5,1.5" fill="none" stroke="#666" stroke-width="3"/></svg>
<svg style="position:absolute;left:70px;top:422px;" width="11" height="17" viewBox="0 0 11 17"><path d="M1.8,1.5 L8.5,8.3 L1.8,15" fill="none" stroke="#666" stroke-width="3"/></svg>
<div style="position:absolute;left:74px;top:255px;width:1.3px;height:155px;background:#d0d0d0"></div>
<div style="position:absolute;left:67px;top:409.5px;width:14px;height:1.5px;background:#d0d0d0"></div>
<svg style="position:absolute;left:102px;top:267.5px;" width="13" height="13" viewBox="0 0 13 13"><circle cx="6.5" cy="6.5" r="5" fill="none" stroke="#555" stroke-width="1.4"/><circle cx="6.5" cy="6.5" r="2.2" fill="#444"/></svg>
<svg style="position:absolute;left:98.4px;top:302px;" width="22" height="23" viewBox="0 0 22 23"><path d="M1,1 L21,4.5 L21,22 L1,18.5 Z" fill="#ddd" stroke="#555" stroke-width="1.5" stroke-linejoin="round"/><path d="M10.5,2.7 L10.5,11.5 L21,13.3" fill="#fff" stroke="#555" stroke-width="1.5"/><path d="M10.8,3 L20.5,4.8 L20.5,13 L10.8,11.2 Z" fill="#fff"/><path d="M10.5,2.7 L10.5,11.5 L21,13.3" fill="none" stroke="#555" stroke-width="1.5"/></svg>
<svg style="position:absolute;left:98.4px;top:341px;" width="22" height="23" viewBox="0 0 22 23"><path d="M1,1 L21,4.5 L21,22 L1,18.5 Z" fill="#ddd" stroke="#555" stroke-width="1.5" stroke-linejoin="round"/><path d="M10.5,2.7 L10.5,11.5 L21,13.3" fill="#fff" stroke="#555" stroke-width="1.5"/><path d="M10.8,3 L20.5,4.8 L20.5,13 L10.8,11.2 Z" fill="#fff"/><path d="M10.5,2.7 L10.5,11.5 L21,13.3" fill="none" stroke="#555" stroke-width="1.5"/></svg>
<svg style="position:absolute;left:98.4px;top:380px;" width="22" height="23" viewBox="0 0 22 23"><path d="M1,1 L21,4.5 L21,22 L1,18.5 Z" fill="#ddd" stroke="#555" stroke-width="1.5" stroke-linejoin="round"/><path d="M10.5,2.7 L10.5,11.5 L21,13.3" fill="#fff" stroke="#555" stroke-width="1.5"/><path d="M10.8,3 L20.5,4.8 L20.5,13 L10.8,11.2 Z" fill="#fff"/><path d="M10.5,2.7 L10.5,11.5 L21,13.3" fill="none" stroke="#555" stroke-width="1.5"/></svg>
<svg style="position:absolute;left:100.6px;top:419px;" width="20" height="22" viewBox="0 0 20 22"><path d="M10,1 L19,5.5 L19,16 L10,20.5 L1,16 L1,5.5 Z" fill="#eee" stroke="#555" stroke-width="1.4" stroke-linejoin="round"/><path d="M1,5.5 L10,10 L19,5.5 M10,10 L10,20.5" fill="none" stroke="#555" stroke-width="1.4"/><path d="M10.6,10.5 L18.4,6.5 L18.4,15.6 L10.6,19.6 Z" fill="#ccc"/></svg>
<svg style="position:absolute;left:296px;top:415.5px;" width="9" height="28" viewBox="0 0 9 28"><g fill="#2e2e2e"><rect x="3" y="0" width="3" height="3"/><rect x="3" y="5" width="3" height="3"/><circle cx="4.5" cy="13.5" r="4.3"/><rect x="3" y="19" width="3" height="3"/><rect x="3" y="24" width="3" height="3"/></g></svg>
<svg style="position:absolute;left:99px;top:460px;" width="24" height="19" viewBox="0 0 24 19"><path d="M1,1 L8.5,1 L10.5,3.5 L22.5,3.5 L22.5,17.5 L1,17.5 Z" fill="#f8f8f8" stroke="#555" stroke-width="1.5" stroke-linejoin="round"/></svg>
<div style="position:absolute;left:74px;top:489.5px;width:1.3px;height:115px;background:#d0d0d0"></div>
<div style="position:absolute;left:67px;top:604.5px;width:14px;height:1.5px;background:#d0d0d0"></div>
<svg style="position:absolute;left:97px;top:497px;" width="24" height="23" viewBox="0 0 24 23"><path d="M5,18 L18.5,3 Q20,1.5 21.5,3 L22.5,4 Q24,5.5 22.5,7 L9,21 L3.5,22 Z" fill="#fff" stroke="#444" stroke-width="1.4" stroke-linejoin="round"/><path d="M5,18 L9,21 M6.5,16.5 L10.5,19.5" fill="none" stroke="#444" stroke-width="1.2"/><line x1="0.5" y1="22.5" x2="23.5" y2="22.5" stroke="#2b5fb8" stroke-width="1.5"/></svg>
<svg style="position:absolute;left:97px;top:536px;" width="24" height="23" viewBox="0 0 24 23"><path d="M5,18 L18.5,3 Q20,1.5 21.5,3 L22.5,4 Q24,5.5 22.5,7 L9,21 L3.5,22 Z" fill="#fff" stroke="#444" stroke-width="1.4" stroke-linejoin="round"/><path d="M5,18 L9,21 M6.5,16.5 L10.5,19.5" fill="none" stroke="#444" stroke-width="1.2"/><line x1="0.5" y1="22.5" x2="23.5" y2="22.5" stroke="#2b5fb8" stroke-width="1.5"/></svg>
<svg style="position:absolute;left:97px;top:575px;" width="24" height="23" viewBox="0 0 24 23"><path d="M5,18 L18.5,3 Q20,1.5 21.5,3 L22.5,4 Q24,5.5 22.5,7 L9,21 L3.5,22 Z" fill="#fff" stroke="#444" stroke-width="1.4" stroke-linejoin="round"/><path d="M5,18 L9,21 M6.5,16.5 L10.5,19.5" fill="none" stroke="#444" stroke-width="1.2"/><line x1="0.5" y1="22.5" x2="23.5" y2="22.5" stroke="#2b5fb8" stroke-width="1.5"/></svg>
<div style="position:absolute;left:68px;top:620px;width:285px;height:10px;background:#b5b5b5"></div>
<div style="position:absolute;left:60px;top:946px;width:300px;height:2px;background:#d2d2d2"></div>
<svg style="position:absolute;left:97px;top:994px;" width="24" height="24" viewBox="0 0 24 24"><path d="M1,12 L5,8.5 L11,8.5 L11,4 L15,0.8 L22.5,0.8 L22.5,18.5 L19,22.5 L4.5,22.5 L1,19 Z" fill="#fff" stroke="#555" stroke-width="1.4" stroke-linejoin="round"/><path d="M1,12 L7,12 L11,8.5 M7,12 L7,22.5 M11,8.5 L11,16.5 L7,19.5 M11,4 L18.5,4 L22.5,0.8 M18.5,4 L18.5,22.5" fill="none" stroke="#555" stroke-width="1.2"/><path d="M12,5 L18,5 L18,16 L12,16 Z" fill="#e6e6e6"/></svg>
<div style="position:absolute;left:369px;top:119px;width:330px;height:328px;background:#fff;box-shadow:0 3px 9px rgba(0,0,0,0.22)"></div>
<div style="position:absolute;left:369px;top:160.5px;width:330px;height:1.3px;background:#d6d6d6"></div>
<div style="position:absolute;left:615px;top:119px;width:42px;height:41.5px;background:#009a00"></div>
<svg style="position:absolute;left:624px;top:132px;" width="25" height="18" viewBox="0 0 25 18"><path d="M2,8.5 L9,15 L23,2" fill="none" stroke="#fff" stroke-width="4.2"/></svg>
<svg style="position:absolute;left:669px;top:132.5px;" width="19" height="18" viewBox="0 0 19 18"><path d="M2,2 L17,16 M17,2 L2,16" stroke="#cc2b3b" stroke-width="4.2"/></svg>
<div style="position:absolute;left:374.5px;top:169.5px;width:281px;height:63.5px;border:1.2px solid #d9d9d9;border-radius:4px;box-sizing:border-box"></div>
<svg style="position:absolute;left:627px;top:212px;" width="12" height="11" viewBox="0 0 12 11"><path d="M1,0.5 L11,10.5 M11,0.5 L1,10.5" stroke="#555" stroke-width="1.6"/></svg>
<svg style="position:absolute;left:662px;top:174px;" width="28" height="28" viewBox="0 0 28 28"><circle cx="13.8" cy="13.8" r="12.8" fill="none" stroke="#2e2e2e" stroke-width="1.6"/><circle cx="13.8" cy="13.8" r="10" fill="#fff" stroke="#2e2e2e" stroke-width="1.6"/><path d="M13.8,13.8 L13.8,3.8 A10,10 0 0 1 23.8,13.8 Z" fill="#e8e8e8"/><path d="M13.8,4 L13.8,13.8 L23.8,13.8" fill="none" stroke="#2e2e2e" stroke-width="1.6"/></svg>
<div style="position:absolute;left:375px;top:253px;width:18px;height:18px;border:1.3px solid #8a8a8a;border-radius:4px;box-sizing:border-box;background:#fff"></div>
<div style="position:absolute;left:375px;top:294.4px;width:18px;height:18px;border:1.3px solid #8a8a8a;border-radius:4px;box-sizing:border-box;background:#fff"></div>
<div style="position:absolute;left:375px;top:335px;width:18px;height:18px;border:1.3px solid #8a8a8a;border-radius:4px;box-sizing:border-box;background:#fff"></div>
<div style="position:absolute;left:375px;top:376px;width:18px;height:18px;background:#1d55c0;border-radius:4px"></div>
<svg style="position:absolute;left:377px;top:379px;" width="14" height="12" viewBox="0 0 14 12"><path d="M2,6 L5.5,9.5 L12,2.5" fill="none" stroke="#fff" stroke-width="2.6"/></svg>
<div style="position:absolute;left:627.5px;top:410px;width:32px;height:32px;border:1.2px solid #b0b0b0;border-radius:5px;box-sizing:border-box;background:#fff"></div>
<svg style="position:absolute;left:630px;top:413px;" width="27" height="27" viewBox="0 0 27 27"><circle cx="13" cy="13" r="11" fill="none" stroke="#2e2e2e" stroke-width="1.8"/><path d="M7,19 L12,11 L19.5,3.5 L22,6 L14.5,13.5 L7,19 Z M12,11 L14.5,13.5" fill="#fff" stroke="#2e2e2e" stroke-width="1.6" stroke-linejoin="round"/><path d="M3.5,18.5 L22,18.5" stroke="#1e5bc6" stroke-width="2"/><path d="M20,20 L24.5,24.5" stroke="#2e2e2e" stroke-width="3"/></svg>
<svg style="position:absolute;left:673px;top:421.5px;" width="19.5" height="19.5" viewBox="0 0 19.5 19.5"><circle cx="9.75" cy="9.75" r="9.5" fill="#9b9b9b"/><path d="M6.3,7.3 Q6.3,3.8 9.8,3.8 Q13.3,3.8 13.3,7 Q13.3,8.8 11.3,9.8 Q10.8,10.2 10.8,11.3 L8.8,11.3 Q8.8,9.2 10.2,8.5 Q11.2,8 11.2,7.1 Q11.2,5.9 9.8,5.9 Q8.5,5.9 8.5,7.3 Z" fill="#fff"/><rect x="8.8" y="12.8" width="2.1" height="2.1" fill="#fff"/></svg>
<div style="position:absolute;left:368px;top:716.5px;width:48px;height:49.5px;background:#fff;border:1.2px solid #cfcfcf;border-left:none;box-sizing:border-box"></div>
<svg style="position:absolute;left:378px;top:730.5px;" width="28" height="26" viewBox="0 0 28 26"><path d="M0.5,1 L3.5,4 L6.5,1" fill="none" stroke="#2e2e2e" stroke-width="1.4"/><rect x="3" y="5" width="1.6" height="20" fill="#2e2e2e"/><g fill="#2e2e2e"><rect x="7.5" y="1.5" width="19.5" height="1.6"/><rect x="7.5" y="9" width="19.5" height="1.6"/><rect x="7.5" y="16" width="19.5" height="1.6"/><rect x="7.5" y="23" width="19.5" height="1.6"/></g></svg>
<svg style="position:absolute;left:16.5px;top:1409px;" width="27" height="23" viewBox="0 0 27 23"><rect x="0" y="0.3" width="27" height="11.5" rx="1.5" fill="#2e2e2e"/><circle cx="15.9" cy="11.8" r="8.3" fill="#f9f9f9"/><circle cx="15.9" cy="11.8" r="5.3" fill="#fff" stroke="#2e2e2e" stroke-width="2.7"/><path d="M19.8,15.7 L25.4,21.4" stroke="#2e2e2e" stroke-width="3"/></svg>
<svg style="position:absolute;left:74px;top:1406px;" width="22" height="22" viewBox="0 0 22 22"><path d="M11,0 L11,22 M0,11 L22,11" stroke="#5e5e5e" stroke-width="3.7"/></svg>
<div style="position:absolute;left:118.5px;top:1395.5px;width:301.5px;height:42.5px;background:#e8e8e8;border-radius:6px 0 0 6px;border-right:1.5px solid #cfcfcf;border-bottom:2px solid #c6c6c6;box-sizing:border-box"></div>
<div style="position:absolute;left:421.5px;top:1395.5px;width:300px;height:42.5px;background:#fff;border-radius:0 0 6px 6px"></div>
<div style="position:absolute;left:423px;top:1433.5px;width:297px;height:3px;background:#1b52bd;border-radius:0 0 4px 4px"></div>
<div style="position:absolute;left:724.5px;top:1395.5px;width:300px;height:42.5px;background:#e8e8e8;border-radius:0 0 6px 6px;border-right:1.5px solid #cfcfcf;border-bottom:2px solid #c6c6c6;box-sizing:border-box"></div>
<svg style="position:absolute;left:139px;top:1403.5px;" width="20.5" height="20.5" viewBox="0 0 20.5 20.5"><circle cx="10.25" cy="10.25" r="10" fill="#6b9bd4"/><path d="M10.25,3.5 L10.25,13 M5.5,9 L10.25,14.5 L15,9" fill="none" stroke="#fff" stroke-width="2.8"/></svg>
<svg style="position:absolute;left:165.5px;top:1401.5px;" width="27" height="27" viewBox="0 0 27 27"><path d="M1,5 L4,1 L21,1 L25.8,5.5 L25.8,26 L5,26 L1,21.5 Z" fill="#fff" stroke="#2e2e2e" stroke-width="1.6"/><path d="M1,5 L1,17.5 L5,17.5 L21,17.5 L21,5 Z" fill="#8c8c8c" stroke="#2e2e2e" stroke-width="1.4"/><path d="M1,5 L21,5 L25.8,1" fill="none" stroke="#2e2e2e" stroke-width="1"/><path d="M5,5 L5,17.5" stroke="#2e2e2e" stroke-width="0.8"/></svg>
<svg style="position:absolute;left:440px;top:1401.5px;" width="26" height="27" viewBox="0 0 26 27"><path d="M1,9 L4,6 L10,6 L10,26 L4,26 L1,23 Z" fill="#fff" stroke="#2e2e2e" stroke-width="1.5" stroke-linejoin="round"/><path d="M4,9 L4,26 M1,9 L4,9 L10,6" fill="none" stroke="#2e2e2e" stroke-width="1.2"/><path d="M12,4 L15,1 L22,1 L25,4 L25,26 L15,26 L12,23 Z" fill="#fff" stroke="#2e2e2e" stroke-width="1.5" stroke-linejoin="round"/><path d="M15,4 L15,26 M12,4 L22,4 L25,1" fill="none" stroke="#2e2e2e" stroke-width="1.2"/></svg>
<svg style="position:absolute;left:741px;top:1404.5px;" width="27" height="22" viewBox="0 0 27 22"><path d="M1,1 L9,1 L11,4 L26,4 L26,21 L1,21 Z" fill="#fbfbfb" stroke="#333" stroke-width="1.6" stroke-linejoin="round"/></svg>
<svg style="position:absolute;left:0px;top:0px;pointer-events:none" width="2558" height="1438" viewBox="0 0 2558 1438"><polygon points="2414.8,151.3 2424.8,136.5 2434.8,151.3" fill="#e3e6e9"/><polygon points="2414.8,347 2424.8,360.8 2434.8,347" fill="#e3e6e9"/><polygon points="2326,238 2313,248.5 2326,259" fill="#e3e6e9"/><polygon points="2522.6,238 2535.6,248.5 2522.6,259" fill="#e3e6e9"/><path d="M2393,154 Q2368,162 2352,178" fill="none" stroke="#e3e6e9" stroke-width="7"/><polygon points="2344,186 2346,168 2362,182" fill="#e3e6e9"/><path d="M2456,154 Q2481,162 2497,178" fill="none" stroke="#e3e6e9" stroke-width="7"/><polygon points="2505,186 2503,168 2487,182" fill="#e3e6e9"/><polygon points="2398,206 2451,206 2467.8,222 2467.8,276 2451,292 2398,292 2381.7,276 2381.7,222" fill="#e3e6e9"/><rect x="2390" y="216.5" width="67.4" height="67" rx="13" fill="#fff"/><line x1="2378" y1="206" x2="2378" y2="295" stroke="#3a3ad0" stroke-width="2"/><line x1="2377" y1="294.7" x2="2467" y2="294.7" stroke="#44b044" stroke-width="2"/></svg>
<svg style="position:absolute;left:2477.7px;top:334.7px;" width="27" height="28" viewBox="0 0 27 28"><path d="M13.5,1 L25.5,5.5 L25.5,21 L13.5,26.5 L1.5,21 L1.5,5.5 Z" fill="#fff" stroke="#2e2e2e" stroke-width="1.8" stroke-linejoin="round"/><path d="M1.5,5.5 L13.5,10.5 L13.5,26.5 L1.5,21 Z" fill="#999"/><path d="M13.5,10.5 L25.5,5.5 L25.5,21 L13.5,26.5 Z" fill="#d9d9d9"/><path d="M1.5,5.5 L13.5,10.5 L25.5,5.5 M13.5,10.5 L13.5,26.5" fill="none" stroke="#2e2e2e" stroke-width="1.5"/><path d="M13.5,1 L25.5,5.5 L25.5,21 L13.5,26.5 L1.5,21 L1.5,5.5 Z" fill="none" stroke="#2e2e2e" stroke-width="1.8" stroke-linejoin="round"/></svg>
<svg style="position:absolute;left:2517.4px;top:345px;" width="11.5" height="6" viewBox="0 0 11.5 6"><polygon points="0,0 11.2,0 5.6,5.5" fill="#2e2e2e"/></svg>
<div style="position:absolute;left:2511px;top:485px;width:47px;height:199.5px;border:1.3px solid #b5b5b5;border-right:none;box-sizing:border-box;background:#fff"></div>
<div style="position:absolute;left:2511px;top:535.3px;width:47px;height:1.3px;background:#b5b5b5"></div>
<div style="position:absolute;left:2511px;top:584.4px;width:47px;height:1.3px;background:#b5b5b5"></div>
<div style="position:absolute;left:2511px;top:634px;width:47px;height:1.3px;background:#b5b5b5"></div>
<div style="position:absolute;left:2511px;top:700px;width:47px;height:297px;border:1.3px solid #b5b5b5;border-right:none;box-sizing:border-box;background:#fff"></div>
<div style="position:absolute;left:2511px;top:749.3px;width:47px;height:1.3px;background:#b5b5b5"></div>
<div style="position:absolute;left:2511px;top:799px;width:47px;height:1.3px;background:#b5b5b5"></div>
<div style="position:absolute;left:2511px;top:848px;width:47px;height:1.3px;background:#b5b5b5"></div>
<div style="position:absolute;left:2511px;top:898px;width:47px;height:1.3px;background:#b5b5b5"></div>
<div style="position:absolute;left:2511px;top:947px;width:47px;height:1.3px;background:#b5b5b5"></div>
<svg style="position:absolute;left:2520px;top:498px;" width="30" height="27" viewBox="0 0 30 27"><path d="M4,16 L11,0.8 Q13,0 14.5,1.5 L17,6 L13,16 Z" fill="#666" stroke="#444" stroke-width="0.8"/><path d="M8,16 L19.5,5.5 Q21,4.5 22.5,6 L25,8.5 L17,16 Z" fill="#888" stroke="#555" stroke-width="0.8"/><path d="M11,16 L17,11 L20,16 Z" fill="#ccc"/><rect x="1.5" y="16" width="27.5" height="9" rx="1.5" fill="#fff" stroke="#2e2e2e" stroke-width="1.4"/><rect x="20" y="16.7" width="8.3" height="7.6" fill="#ccc"/><path d="M10.5,16 L10.5,25 M20,16 L20,25" stroke="#2e2e2e" stroke-width="1.2"/><circle cx="6" cy="20.5" r="1.6" fill="none" stroke="#2e2e2e" stroke-width="1"/></svg>
<svg style="position:absolute;left:2520px;top:547px;" width="30" height="30" viewBox="0 0 30 30"><path d="M16,8 L26,12.5 L26,23 L16,28 L6,23 L6,12.5 Z" fill="#fff" stroke="#2e2e2e" stroke-width="1.6" stroke-linejoin="round"/><path d="M6,12.5 L16,17.5 L26,12.5 M16,17.5 L16,28" fill="none" stroke="#2e2e2e" stroke-width="1.6"/><rect x="0.5" y="0.5" width="14.5" height="11" fill="#2d7be0"/><path d="M0.5,4.2 L15,4.2 M0.5,7.8 L15,7.8 M5.3,0.5 L5.3,11.5 M10.2,0.5 L10.2,11.5" stroke="#fff" stroke-width="0.9"/></svg>
<svg style="position:absolute;left:2520px;top:597px;" width="30" height="30" viewBox="0 0 30 30"><path d="M5,11 Q2.5,11 2.5,13.5 L2.5,19 Q2.5,21 0.8,21.5 Q2.5,22 2.5,24 L2.5,27.5 Q2.5,29.5 5,29.5 M25.5,9 Q28,9 28,11.5 L28,18 Q28,20 29.7,20.5 Q28,21 28,23 L28,27 Q28,29 25.5,29" fill="none" stroke="#2e2e2e" stroke-width="1.4"/><path d="M16,11 L24.5,14.5 L24.5,23 L16,27 L7.5,23 L7.5,14.5 Z" fill="#fff" stroke="#2e2e2e" stroke-width="1.5" stroke-linejoin="round"/><path d="M7.5,14.5 L16,18.5 L24.5,14.5 M16,18.5 L16,27" fill="none" stroke="#2e2e2e" stroke-width="1.4"/><rect x="1.5" y="0.5" width="13" height="10.5" fill="#555"/><path d="M1.5,4 L14.5,4 M1.5,7.5 L14.5,7.5 M5.8,0.5 L5.8,11 M10.2,0.5 L10.2,11" stroke="#fff" stroke-width="0.9"/></svg>
<svg style="position:absolute;left:2520px;top:646px;" width="31" height="28" viewBox="0 0 31 28"><path d="M4,7 Q-0.5,17 4,27 M27,9 Q31,17.5 27,26" fill="none" stroke="#2e2e2e" stroke-width="2.8"/><text x="4.5" y="25.5" font-family="Liberation Serif" font-style="italic" font-weight="bold" font-size="31" fill="#2e2e2e">x</text><rect x="5" y="0.5" width="12" height="10.5" fill="#555"/><path d="M5,4 L17,4 M5,7.5 L17,7.5 M9,0.5 L9,11 M13,0.5 L13,11" stroke="#fff" stroke-width="0.9"/></svg>
<div style="position:absolute;left:2518.5px;top:707px;width:35px;height:35px;background:#dcdcdc;border-radius:6px"></div>
<div style="position:absolute;left:2518.5px;top:756px;width:35px;height:35px;background:#dcdcdc;border-radius:6px"></div>
<div style="position:absolute;left:2518.5px;top:806px;width:35px;height:35px;background:#dcdcdc;border-radius:6px"></div>
<div style="position:absolute;left:2518.5px;top:855.5px;width:35px;height:35px;background:#dcdcdc;border-radius:6px"></div>
<div style="position:absolute;left:2518.5px;top:904.5px;width:35px;height:35px;background:#dcdcdc;border-radius:6px"></div>
<div style="position:absolute;left:2518.5px;top:954px;width:35px;height:35px;background:#dcdcdc;border-radius:6px"></div>
<div style="position:absolute;left:2522px;top:710.5px;width:28px;height:28px;background:#1a63d9;border:1.5px solid #111;box-sizing:border-box"></div>
<div class="t" style="left:2524px;top:714.5px;font-size:19px;color:#fff;font-family:'Liberation Serif';font-weight:bold;letter-spacing:-1.5px;transform:scaleX(0.78);transform-origin:0 0">MK</div>
<svg style="position:absolute;left:2522px;top:761px;" width="28" height="28" viewBox="0 0 28 28"><path d="M9,5 Q9,2 12,2 M19,5 Q19,2 16,2 M7,6 Q6,2 9,0.5 M21,6 Q22,2 19,0.5" fill="none" stroke="#3d6fd0" stroke-width="1.1"/><circle cx="14" cy="3" r="1.8" fill="#2e2e2e"/><rect x="13.3" y="3" width="1.4" height="5" fill="#2e2e2e"/><path d="M3,9 L25,7 L26.5,22 L4,24 Z" fill="#2e2e2e"/><rect x="0.5" y="12" width="3" height="7" fill="#2e2e2e"/><rect x="25" y="11" width="3" height="7" fill="#2e2e2e"/><circle cx="9.5" cy="15" r="3.6" fill="#fff"/><circle cx="19" cy="14" r="3.6" fill="#fff"/><circle cx="10" cy="15.5" r="2" fill="#2d6fd8"/><circle cx="18.5" cy="14.5" r="2" fill="#2d6fd8"/><path d="M13,20 Q17,21.5 19,18.5" fill="none" stroke="#fff" stroke-width="1.5"/></svg>
<div style="position:absolute;left:2521.5px;top:810.5px;width:29px;height:29px;background:#fff"></div>
<svg style="position:absolute;left:2522px;top:812px;" width="28" height="26" viewBox="0 0 28 26"><path d="M8,7 L2,13 L8,19 M2,13 L10,13" fill="none" stroke="#2e2e2e" stroke-width="1.6"/><path d="M13,1 Q10,1 10,4 L10,10 Q10,13 8,13 Q10,13 10,16 L10,22 Q10,25 13,25" fill="none" stroke="#2e2e2e" stroke-width="1.4"/><path d="M19.5,7 L27,10.5 L27,17.5 L19.5,21 L12,17.5 L12,10.5 Z" fill="#fff" stroke="#2e2e2e" stroke-width="1.4" stroke-linejoin="round"/><path d="M12,10.5 L19.5,14 L27,10.5 M19.5,14 L19.5,21" fill="none" stroke="#2e2e2e" stroke-width="1.3"/></svg>
<svg style="position:absolute;left:2521.5px;top:861px;" width="29" height="26" viewBox="0 0 29 26"><path d="M15,0.5 L28.5,25.5 L19,25.5 Q22,19 16,16 Q10,13 13,8 Z M0.5,25.5 L8,11.5 Q9,19 15,19.5 Q12,22 8.5,25.5 Z" fill="#1fa2dc"/></svg>
<div style="position:absolute;left:2521.5px;top:909.5px;width:29px;height:28px;background:#4aa84a;border-radius:2px"></div>
<svg style="position:absolute;left:2523px;top:912px;" width="26" height="23" viewBox="0 0 26 23"><path d="M2,3 Q7,0.5 12.5,3 L12.5,21 Q7,18.5 2,21 Z M13.5,3 Q19,0.5 24,3 L24,21 Q19,18.5 13.5,21 Z" fill="#fff"/><path d="M13,3 L13,21.5" stroke="#4aa84a" stroke-width="1"/></svg>
<div style="position:absolute;left:2521.5px;top:958.5px;width:29px;height:28px;background:#1a63d9;border:1.5px solid #111;box-sizing:border-box"></div>
<svg style="position:absolute;left:2523px;top:961px;" width="26" height="23" viewBox="0 0 26 23"><path d="M2,3 Q7,0.5 12.5,3 L12.5,21 Q7,18.5 2,21 Z M13.5,3 Q19,0.5 24,3 L24,21 Q19,18.5 13.5,21 Z" fill="#fff" stroke="#111" stroke-width="1.4"/></svg>
<svg style="position:absolute;left:2412px;top:1365px;" width="25" height="19" viewBox="0 0 25 19"><ellipse cx="16" cy="6.5" rx="7.5" ry="5.5" fill="#fff" stroke="#2e2e2e" stroke-width="1.6"/><ellipse cx="16" cy="6" rx="3.5" ry="1.8" fill="none" stroke="#2e2e2e" stroke-width="1.4"/><path d="M0.8,10 L14,10 M23.5,7 L23.5,13.5 Q23.5,17.5 19.5,17.5 L0.8,17.5 L0.8,10" fill="#fff" stroke="#2e2e2e" stroke-width="1.6"/><path d="M3,17.5 L3,14.5 M6,17.5 L6,15.5 M9,17.5 L9,14.5 M12,17.5 L12,15.5 M15,17.5 L15,14.5 M18,17.5 L18,15.5" stroke="#2e2e2e" stroke-width="0.9"/></svg>
<svg style="position:absolute;left:2462px;top:1365px;" width="30" height="20" viewBox="0 0 30 20"><path d="M1,18.5 Q0,1 15,1 Q30,1 29,18.5 Z" fill="#fff" stroke="#2e2e2e" stroke-width="1.8" stroke-linejoin="round"/><path d="M5.5,15.5 Q5.5,5.5 15,5.5 Q24.5,5.5 24.5,15.5 L17.5,15.5 Q17.5,12 15,12 Q12.5,12 12.5,15.5 Z" fill="#fff" stroke="#2e2e2e" stroke-width="1.6" stroke-linejoin="round"/><path d="M3,10 L5,11 M6,5.5 L7.5,7 M10.5,2.5 L11,4.5 M15,2 L15,4 M19.5,2.5 L19,4.5 M24,5.5 L22.5,7 M27,10 L25,11" stroke="#2e2e2e" stroke-width="0.9"/></svg>
<svg style="position:absolute;left:2518.7px;top:1363.5px;" width="21" height="21" viewBox="0 0 21 21"><path d="M1,2 L20,2 M10.5,2 L10.5,17.5" stroke="#2e2e2e" stroke-width="2"/><rect x="1" y="18" width="19.5" height="2.6" fill="#2e2e2e"/><path d="M3.5,2 L1.2,12 L5.8,12 Z M17.5,2 L15.2,12 L19.8,12 Z" fill="none" stroke="#2e2e2e" stroke-width="1.3"/><rect x="0.5" y="12" width="6" height="2" fill="#2e2e2e"/><rect x="14.5" y="12" width="6" height="2" fill="#2e2e2e"/></svg>
<div class="t" style="left:71px;top:11.56px;font-size:31.1px;letter-spacing:1.917px;color:#6b6b6b;font-weight:normal;font-style:normal">onshape</div>
<div class="t" style="left:261px;top:14.96px;font-size:32.99px;letter-spacing:-0.32px;color:#333333;font-weight:bold;font-style:normal">1E - Full Detail Drivebase</div>
<div class="t" style="left:659px;top:22.69px;font-size:23.66px;letter-spacing:-0.333px;color:#959595;font-weight:normal;font-style:normal">FRCDesignLib Update</div>
<div class="t" style="left:981.5px;top:19.64px;font-size:23.48px;letter-spacing:-0.417px;color:#959595;font-weight:normal;font-style:normal">Stage 1</div>
<div class="t" style="left:1255px;top:20.55px;font-size:21.35px;letter-spacing:0.0px;color:#333333;font-weight:normal;font-style:normal">164</div>
<div class="t" style="left:1351px;top:20.53px;font-size:21.38px;letter-spacing:0.0px;color:#333333;font-weight:normal;font-style:normal">404</div>
<div class="t" style="left:1445.5px;top:20.22px;font-size:21.74px;letter-spacing:0px;color:#333333;font-weight:normal;font-style:normal">2</div>
<div class="t" style="left:2281px;top:19.64px;font-size:19.84px;letter-spacing:-0.25px;color:#ffffff;font-weight:bold;font-style:normal">Share</div>
<div class="t" style="left:2480px;top:20.64px;font-size:21.01px;letter-spacing:0.75px;color:#333333;font-weight:normal;font-style:normal">Kelly</div>
<div class="t" style="left:2231.6px;top:77.1px;font-size:21.06px;letter-spacing:-0.214px;color:#333333;font-weight:normal;font-style:normal">Search tools...</div>
<div class="t" style="left:127.5px;top:139.26px;font-size:19.69px;letter-spacing:-0.214px;color:#6f6f6f;font-weight:normal;font-style:italic">Filter by name or type</div>
<div class="t" style="left:66px;top:183.99px;font-size:20.01px;letter-spacing:-0.409px;color:#333333;font-weight:bold;font-style:normal">Features (8)</div>
<div class="t" style="left:94.6px;top:225.11px;font-size:19.28px;letter-spacing:0.36px;color:#333333;font-weight:normal;font-style:normal">Default geometry</div>
<div class="t" style="left:127px;top:264.37px;font-size:19.57px;letter-spacing:0.3px;color:#333333;font-weight:normal;font-style:normal">Origin</div>
<div class="t" style="left:128px;top:302.87px;font-size:19.57px;letter-spacing:0.5px;color:#333333;font-weight:normal;font-style:normal">Top</div>
<div class="t" style="left:126px;top:341.87px;font-size:19.57px;letter-spacing:0.75px;color:#333333;font-weight:normal;font-style:normal">Front</div>
<div class="t" style="left:126px;top:380.77px;font-size:19.57px;letter-spacing:0.375px;color:#333333;font-weight:normal;font-style:normal">Right</div>
<div class="t" style="left:128.7px;top:419.07px;font-size:19.57px;letter-spacing:-0.17px;color:#333333;font-weight:normal;font-style:normal">Origin Cube</div>
<div class="t" style="left:127.7px;top:459.37px;font-size:19.57px;letter-spacing:0.254px;color:#333333;font-weight:normal;font-style:normal">Drivetrain (3)</div>
<div class="t" style="left:126px;top:497.87px;font-size:19.57px;letter-spacing:0.0px;color:#333333;font-weight:normal;font-style:normal">DT Side Layout</div>
<div class="t" style="left:126px;top:536.87px;font-size:19.57px;letter-spacing:0.25px;color:#333333;font-weight:normal;font-style:normal">DT Top Layout</div>
<div class="t" style="left:127px;top:575.77px;font-size:19.57px;letter-spacing:0.167px;color:#333333;font-weight:bold;font-style:normal">Bumpers</div>
<div class="t" style="left:93.6px;top:957.37px;font-size:19.57px;letter-spacing:-0.012px;color:#333333;font-weight:normal;font-style:normal">Parts (1)</div>
<div class="t" style="left:127.5px;top:995.87px;font-size:19.57px;letter-spacing:-0.25px;color:#333333;font-weight:normal;font-style:normal">Origin Cube</div>
<div class="t" style="left:378px;top:131.01px;font-size:19.99px;letter-spacing:-0.833px;color:#333333;font-weight:bold;font-style:normal">Bumpers</div>
<div class="t" style="left:382.5px;top:178.9px;font-size:15.41px;letter-spacing:-0.182px;color:#666666;font-weight:normal;font-style:normal">Sketch plane</div>
<div class="t" style="left:383.4px;top:206.49px;font-size:18.84px;letter-spacing:0.36px;color:#555555;font-weight:normal;font-style:normal">Right plane</div>
<div class="t" style="left:398.7px;top:253.74px;font-size:19.13px;letter-spacing:0.488px;color:#555555;font-weight:normal;font-style:normal">Disable imprinting</div>
<div class="t" style="left:398.7px;top:294.44px;font-size:19.13px;letter-spacing:0.487px;color:#555555;font-weight:normal;font-style:normal">Show constraints</div>
<div class="t" style="left:398.7px;top:335.44px;font-size:19.13px;letter-spacing:0.22px;color:#555555;font-weight:normal;font-style:normal">Show expressions</div>
<div class="t" style="left:398.7px;top:376.54px;font-size:19.13px;letter-spacing:0.43px;color:#555555;font-weight:normal;font-style:normal">Show errors</div>
<div class="t" style="left:637.8px;top:484.49px;font-size:27.54px;letter-spacing:1.8px;color:#8ccbee;font-weight:normal;font-style:normal">Bumpers</div>
<div class="t" style="left:783px;top:523.82px;font-size:26.09px;letter-spacing:0.233px;color:#333333;font-weight:normal;font-style:normal;-webkit-text-stroke:0.5px #333333">0.75</div>
<div class="t" style="left:476.3px;top:579.24px;font-size:25.36px;letter-spacing:-0.2px;color:#333333;font-weight:normal;font-style:normal;-webkit-text-stroke:0.5px #333333">R1.25</div>
<div class="t" style="left:767.3px;top:665.14px;font-size:25.36px;letter-spacing:1.133px;color:#333333;font-weight:normal;font-style:normal;-webkit-text-stroke:0.5px #333333">0.25</div>
<div class="t" style="left:852px;top:704.89px;font-size:23.19px;letter-spacing:0px;color:#333333;font-weight:normal;font-style:normal;-webkit-text-stroke:0.5px #333333">5</div>
<div class="t" style="left:488px;top:752.46px;font-size:26.52px;letter-spacing:-0.35px;color:#333333;font-weight:normal;font-style:normal;-webkit-text-stroke:0.5px #333333">2.5</div>
<div class="t" style="left:782px;top:957.72px;font-size:26.09px;letter-spacing:0.567px;color:#333333;font-weight:normal;font-style:normal;-webkit-text-stroke:0.5px #333333">0.75</div>
<div class="t" style="left:1272.4px;top:769.85px;font-size:28.12px;letter-spacing:0.9px;color:#3f6fbf;font-weight:normal;font-style:normal;-webkit-text-stroke:0.45px #3f6fbf">Right</div>
<div class="t" style="left:2403px;top:236.86px;font-size:18.99px;letter-spacing:-0.675px;color:#222222;font-weight:normal;font-style:normal">Right</div>
<div class="t" style="left:2372px;top:180.15px;font-size:20.29px;letter-spacing:0px;color:#3030c8;font-weight:normal;font-style:normal">Z</div>
<div class="t" style="left:2475.5px;top:282.57px;font-size:21.45px;letter-spacing:0px;color:#3aa83a;font-weight:normal;font-style:normal">Y</div>
<div class="t" style="left:198.7px;top:1405.93px;font-size:20.9px;letter-spacing:-0.224px;color:#555555;font-weight:normal;font-style:normal">Top Level Robot Ass...</div>
<div class="t" style="left:469.6px;top:1406.33px;font-size:21.14px;letter-spacing:-0.153px;color:#333333;font-weight:normal;font-style:normal">Main Layout Sketch</div>
<div class="t" style="left:772.5px;top:1405.82px;font-size:21.74px;letter-spacing:-0.011px;color:#666666;font-weight:normal;font-style:normal">Drivetrain</div>
</body></html>
